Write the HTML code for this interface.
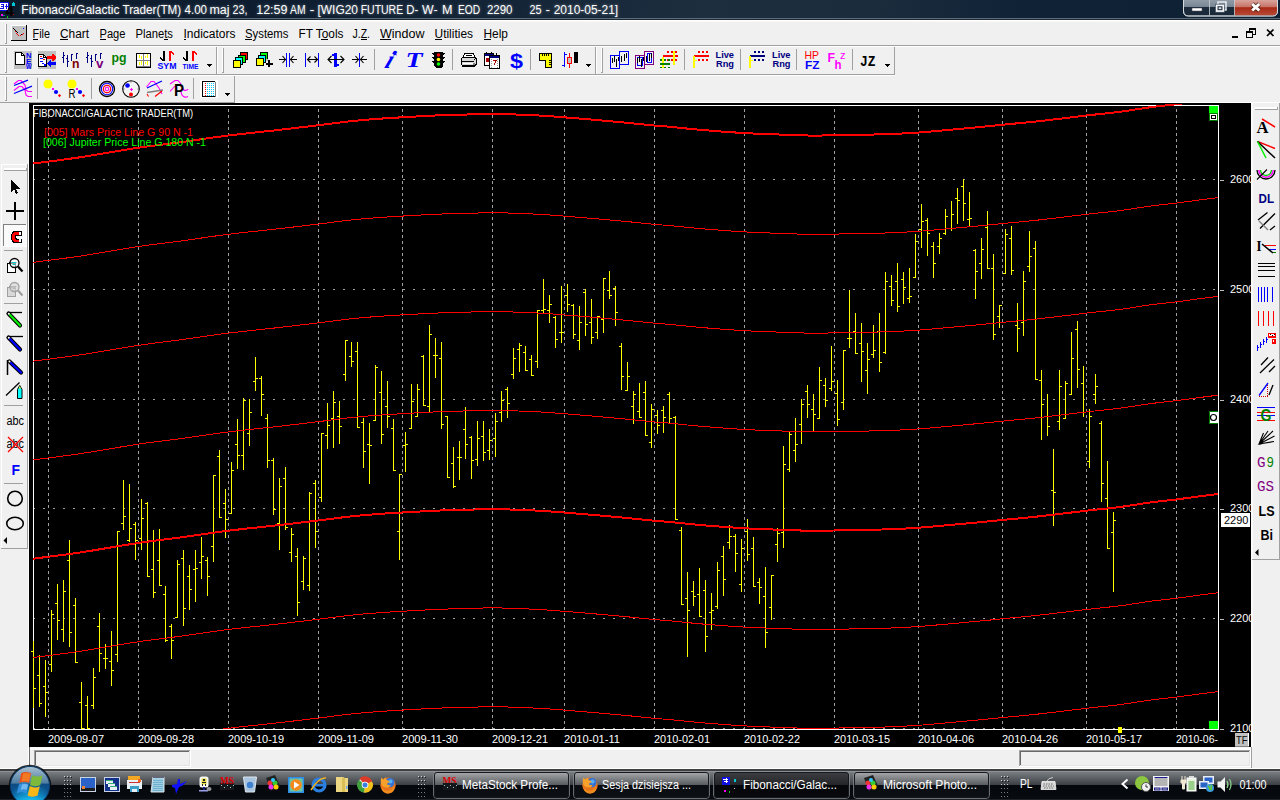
<!DOCTYPE html><html><head><meta charset="utf-8"><title>Fibonacci/Galactic Trader</title><style>
html,body{margin:0;padding:0}
body{width:1280px;height:800px;overflow:hidden;position:relative;background:#f0f0f0;font-family:"Liberation Sans",Arial,sans-serif;font-size:12px;color:#000}
.abs{position:absolute;display:block}
.t{position:absolute;white-space:nowrap;line-height:1}
</style></head><body>
<div class="abs" style="left:0;top:0;width:1280px;height:20px;background:linear-gradient(100deg,#0d1c2d 0%,#0e1e30 22%,#142538 40%,#1d2e3f 55%,#1b2c3d 68%,#102236 80%,#0e2034 100%)"></div>
<div class="abs" style="left:0;top:18px;width:1280px;height:1px;background:#5d6b78"></div>
<div class="abs" style="left:0;top:19px;width:1280px;height:1px;background:#1c2937"></div>
<svg class="abs" style="left:0px;top:0px" width="1280" height="20" viewBox="0 0 1280 20" ><g font-family='"Liberation Sans",Arial,sans-serif'><g font-size="12px" fill="#fff" style="text-shadow:0 0 3px rgba(255,255,255,.5)"><text x="21.3" y="13.5" textLength="98.2" lengthAdjust="spacingAndGlyphs">Fibonacci/Galactic</text><text x="122.5" y="13.5" textLength="58.7" lengthAdjust="spacingAndGlyphs">Trader(TM)</text><text x="184.5" y="13.5" textLength="22.5" lengthAdjust="spacingAndGlyphs">4.00</text><text x="209.5" y="13.5" textLength="20" lengthAdjust="spacingAndGlyphs">maj</text><text x="232.5" y="13.5" textLength="15" lengthAdjust="spacingAndGlyphs">23,</text><text x="256.2" y="13.5" textLength="31.3" lengthAdjust="spacingAndGlyphs">12:59</text><text x="290" y="13.5" textLength="15.5" lengthAdjust="spacingAndGlyphs">AM</text><text x="309.5" y="13.5" textLength="5" lengthAdjust="spacingAndGlyphs">-</text><text x="317.5" y="13.5" textLength="40.5" lengthAdjust="spacingAndGlyphs">[WIG20</text><text x="360.7" y="13.5" textLength="42.5" lengthAdjust="spacingAndGlyphs">FUTURE</text><text x="406.2" y="13.5" textLength="12" lengthAdjust="spacingAndGlyphs">D-</text><text x="422" y="13.5" textLength="15.5" lengthAdjust="spacingAndGlyphs">W-</text><text x="442" y="13.5" textLength="10.5" lengthAdjust="spacingAndGlyphs">M</text><text x="458" y="13.5" textLength="22" lengthAdjust="spacingAndGlyphs">EOD</text><text x="487" y="13.5" textLength="25.5" lengthAdjust="spacingAndGlyphs">2290</text><text x="529.5" y="13.5" textLength="12" lengthAdjust="spacingAndGlyphs">25</text><text x="545.5" y="13.5" textLength="4.5" lengthAdjust="spacingAndGlyphs">-</text><text x="553.7" y="13.5" textLength="64.5" lengthAdjust="spacingAndGlyphs">2010-05-21]</text></g></g><g shape-rendering="crispEdges"><rect x="0" y="2" width="9" height="9" fill="#1010e0" /><rect x="0" y="3" width="8" height="7" fill="#fff" /><rect x="1" y="4" width="3" height="1" fill="#1010e0" /><rect x="3" y="5" width="1" height="1" fill="#1010e0" /><rect x="1" y="6" width="3" height="1" fill="#1010e0" /><rect x="3" y="7" width="1" height="1" fill="#1010e0" /><rect x="0" y="8" width="4" height="1" fill="#1010e0" /><rect x="5" y="6" width="3" height="1" fill="#1010e0" /><rect x="6" y="4" width="1" height="5" fill="#1010e0" /><rect x="12" y="3" width="3" height="3" fill="#00c8d0" /><rect x="13" y="2" width="1" height="1" fill="#00c8d0" /><rect x="1" y="14" width="2" height="2" fill="#f0f" /><rect x="7" y="16" width="1" height="2" fill="#0c0" /><rect x="3" y="15" width="2" height="1" fill="#088" /><rect x="12" y="15" width="1" height="1" fill="#c00" /><rect x="13" y="14" width="1" height="1" fill="#c00" /></g><text x="5.5" y="15.5" font-size="15px" font-weight="bold" fill="#000" font-family='"Liberation Sans",Arial,sans-serif'>4</text><defs><linearGradient id="gb" x1="0" y1="0" x2="0" y2="1"><stop offset="0" stop-color="#939eaa"/><stop offset=".44" stop-color="#7a8794"/><stop offset=".47" stop-color="#1d2c3d"/><stop offset="1" stop-color="#1a2939"/></linearGradient><linearGradient id="gr" x1="0" y1="0" x2="0" y2="1"><stop offset="0" stop-color="#d8a49c"/><stop offset=".42" stop-color="#c8766a"/><stop offset=".5" stop-color="#a92a16"/><stop offset="1" stop-color="#b84a36"/></linearGradient></defs><path d="M1183.5 -1 H1277.5 V11 Q1277.5 16 1272.5 16 H1188.5 Q1183.5 16 1183.5 11 Z" fill="url(#gb)" stroke="#c8ced4" stroke-width="1"/><path d="M1234.5 0 H1277 V11 Q1277 15.5 1272.5 15.5 H1234.5 Z" fill="url(#gr)"/><path d="M1209.5 0V15.5M1234.5 0V15.5" stroke="#c8ced4" stroke-width="1" fill="none" opacity=".8"/><path d="M1183.5 -1 H1277.5 V11 Q1277.5 16 1272.5 16 H1188.5 Q1183.5 16 1183.5 11 Z" fill="none" stroke="#d5dade" stroke-width="1" opacity=".85"/><rect x="1192" y="8" width="10" height="3" fill="#fff" stroke="#445" stroke-width=".5"/><rect x="1218" y="2" width="8" height="8" fill="none" stroke="#e8ecf0" stroke-width="1.500"/><rect x="1215.500" y="4.200" width="9" height="8" fill="#f4f6f8" stroke="#3a4656" stroke-width=".600"/><rect x="1217.500" y="6.200" width="5" height="4" fill="#2c3a4a"/><rect x="1218.700" y="7.300" width="2.600" height="1.800" fill="#dfe4e8"/><path d="M1252.200 4L1259.300 10.500M1259.300 4L1252.200 10.500" stroke="#3a1a16" stroke-width="4.600" stroke-linecap="butt" opacity=".75"/><path d="M1252.200 4L1259.300 10.500M1259.300 4L1252.200 10.500" stroke="#fff" stroke-width="3" stroke-linecap="butt"/></svg>
<svg class="abs" style="left:0px;top:20px" width="1280" height="27" viewBox="0 20 1280 27" ><rect x="0" y="20" width="1280" height="1.5" fill="#fff" /><rect x="0" y="45" width="1280" height="1" fill="#a0a0a0" /><rect x="0" y="46" width="1280" height="1" fill="#fff" /><g shape-rendering="crispEdges"><rect x="5" y="24" width="1" height="19" fill="#fff" /><rect x="6" y="24" width="1" height="19" fill="#a0a0a0" /><rect x="5" y="43" width="2" height="1" fill="#a0a0a0" /><rect x="11" y="25" width="16" height="16" fill="#000" /><rect x="11" y="25" width="15" height="15" fill="#fff" /><rect x="12" y="26" width="14" height="14" fill="#c0c0c0" /><rect x="13" y="28" width="1" height="1" fill="#000" /><rect x="14" y="29" width="1" height="1" fill="#000" /><rect x="15" y="30" width="1" height="1" fill="#000" /><rect x="16" y="31" width="1" height="1" fill="#000" /><rect x="17" y="32" width="1" height="1" fill="#000" /><rect x="21" y="34" width="2" height="1" fill="#000" /><rect x="15" y="31" width="1" height="1" fill="#f00" /><rect x="16" y="33" width="1" height="1" fill="#f00" /><rect x="17" y="34" width="1" height="1" fill="#f00" /><rect x="18" y="35" width="1" height="1" fill="#f00" /><rect x="20" y="35" width="1" height="1" fill="#f00" /><rect x="22" y="34" width="1" height="1" fill="#f00" /><rect x="23" y="33" width="1" height="1" fill="#f00" /><rect x="23" y="28" width="1" height="1" fill="#00f" /><rect x="1232" y="36" width="6" height="2" fill="#000" /><rect x="1249" y="28" width="7" height="2" fill="#000" /><rect x="1249" y="30" width="1" height="2" fill="#000" /><rect x="1255" y="30" width="1" height="4" fill="#000" /><rect x="1253" y="34" width="3" height="1" fill="#000" /><rect x="1246" y="31" width="7" height="2" fill="#000" /><rect x="1246" y="33" width="1" height="4" fill="#000" /><rect x="1252" y="33" width="1" height="4" fill="#000" /><rect x="1246" y="37" width="7" height="1" fill="#000" /></g><path d="M1267 29.5L1273.5 36M1273.5 29.5L1267 36" stroke="#000" stroke-width="1.7" fill="none"/><g font-family='"Liberation Sans",Arial,sans-serif' font-size="12px" fill="#000"><text x="32.5" y="37.5" textLength="17.5" lengthAdjust="spacingAndGlyphs">File</text><text x="60" y="37.5" textLength="29" lengthAdjust="spacingAndGlyphs">Chart</text><text x="99.5" y="37.5" textLength="26" lengthAdjust="spacingAndGlyphs">Page</text><text x="135.5" y="37.5" textLength="37.5" lengthAdjust="spacingAndGlyphs">Planets</text><text x="183.5" y="37.5" textLength="52" lengthAdjust="spacingAndGlyphs">Indicators</text><text x="245" y="37.5" textLength="43.5" lengthAdjust="spacingAndGlyphs">Systems</text><text x="298.5" y="37.5" textLength="45" lengthAdjust="spacingAndGlyphs">FT Tools</text><text x="352.5" y="37.5" textLength="17.5" lengthAdjust="spacingAndGlyphs">J.Z.</text><text x="380" y="37.5" textLength="44.5" lengthAdjust="spacingAndGlyphs">Window</text><text x="434.5" y="37.5" textLength="38.5" lengthAdjust="spacingAndGlyphs">Utilities</text><text x="483.5" y="37.5" textLength="24.5" lengthAdjust="spacingAndGlyphs">Help</text><rect x="32.5" y="39" width="5.5" height="1" fill="#000" shape-rendering="crispEdges"/><rect x="60" y="39" width="7.5" height="1" fill="#000" shape-rendering="crispEdges"/><rect x="99.5" y="39" width="6.5" height="1" fill="#000" shape-rendering="crispEdges"/><rect x="164" y="39" width="4" height="1" fill="#000" shape-rendering="crispEdges"/><rect x="183.5" y="39" width="2.5" height="1" fill="#000" shape-rendering="crispEdges"/><rect x="245" y="39" width="7" height="1" fill="#000" shape-rendering="crispEdges"/><rect x="321" y="39" width="7" height="1" fill="#000" shape-rendering="crispEdges"/><rect x="360.5" y="39" width="6.5" height="1" fill="#000" shape-rendering="crispEdges"/><rect x="380" y="39" width="11" height="1" fill="#000" shape-rendering="crispEdges"/><rect x="434.5" y="39" width="7.5" height="1" fill="#000" shape-rendering="crispEdges"/><rect x="483.5" y="39" width="7.5" height="1" fill="#000" shape-rendering="crispEdges"/></g></svg>
<svg class="abs" style="left:0px;top:47px" width="1280" height="29" viewBox="0 47 1280 29" ><g shape-rendering="crispEdges"><rect x="0" y="74" width="895" height="1" fill="#a0a0a0" /><rect x="0" y="75" width="895" height="1" fill="#fff" /><rect x="5" y="48" width="1" height="24" fill="#fff" /><rect x="6" y="48" width="1" height="24" fill="#a0a0a0" /><rect x="5" y="72" width="2" height="1" fill="#a0a0a0" /><rect x="216" y="47" width="1" height="27" fill="#a0a0a0" /><rect x="217" y="47" width="1" height="27" fill="#fff" /><rect x="222" y="48" width="1" height="24" fill="#fff" /><rect x="223" y="48" width="1" height="24" fill="#a0a0a0" /><rect x="222" y="72" width="2" height="1" fill="#a0a0a0" /><rect x="595" y="47" width="1" height="27" fill="#a0a0a0" /><rect x="596" y="47" width="1" height="27" fill="#fff" /><rect x="601" y="48" width="1" height="24" fill="#fff" /><rect x="602" y="48" width="1" height="24" fill="#a0a0a0" /><rect x="601" y="72" width="2" height="1" fill="#a0a0a0" /><rect x="894" y="47" width="1" height="28" fill="#a0a0a0" /><rect x="374" y="49" width="1" height="21" fill="#a0a0a0" /><rect x="452" y="49" width="1" height="21" fill="#a0a0a0" /><rect x="530" y="49" width="1" height="21" fill="#a0a0a0" /><rect x="684" y="49" width="1" height="21" fill="#a0a0a0" /><rect x="740" y="49" width="1" height="21" fill="#a0a0a0" /><rect x="796" y="49" width="1" height="21" fill="#a0a0a0" /><rect x="852" y="49" width="1" height="21" fill="#a0a0a0" /><rect x="14" y="51" width="18" height="18" fill="#c0c0c0" /><path d="M15.5 52.5h6l2.5 2.5v9.500h-8.500z" fill="#fff" stroke="#000"/><path d="M21.5 52.5v2.500h2.500" fill="none" stroke="#000"/><rect x="38" y="51" width="18" height="18" fill="#c0c0c0" /><path d="M38.500 54.500h5l3 3v8.500h-8z" fill="#fff" stroke="#000"/><path d="M43.500 54.500v3h3" fill="none" stroke="#000"/><rect x="40" y="56" width="2" height="1" fill="#f00" /><rect x="40" y="58" width="3" height="1" fill="#00f" /><rect x="43" y="59" width="2" height="1" fill="#f00" /><rect x="40" y="61" width="3" height="1" fill="#00f" /><rect x="42" y="63" width="2" height="1" fill="#00f" /><rect x="44" y="64" width="2" height="2" fill="#00f" /><path d="M47 56h5v-2h1l3 3v1l-3 3h-1v-2h-5z" fill="#f00"/><path d="M56 62h-5v-2h-1l-3 3v1l3 3h1v-2h5z" fill="#00f"/><rect x="63" y="52" width="1" height="11" fill="#000080" /><rect x="62" y="57" width="1" height="1" fill="#000080" /><rect x="64" y="55" width="1" height="1" fill="#000080" /><rect x="67" y="55" width="1" height="12" fill="#000080" /><rect x="66" y="58" width="1" height="1" fill="#000080" /><rect x="68" y="61" width="1" height="1" fill="#000080" /><rect x="71" y="54" width="1" height="7" fill="#000080" /><rect x="72" y="54" width="1" height="1" fill="#000080" /><rect x="76" y="53" width="1" height="6" fill="#000080" /><rect x="77" y="53" width="1" height="1" fill="#000080" /><rect x="87" y="52" width="1" height="11" fill="#000080" /><rect x="86" y="57" width="1" height="1" fill="#000080" /><rect x="88" y="55" width="1" height="1" fill="#000080" /><rect x="91" y="55" width="1" height="12" fill="#000080" /><rect x="90" y="58" width="1" height="1" fill="#000080" /><rect x="92" y="61" width="1" height="1" fill="#000080" /><rect x="95" y="54" width="1" height="7" fill="#000080" /><rect x="96" y="54" width="1" height="1" fill="#000080" /><rect x="100" y="53" width="1" height="6" fill="#000080" /><rect x="101" y="53" width="1" height="1" fill="#000080" /><rect x="136" y="53" width="15" height="15" fill="#000" /><rect x="137" y="54" width="13" height="12" fill="#fff" /><rect x="137" y="60" width="13" height="1" fill="#808080" /><rect x="143" y="54" width="1" height="12" fill="#808080" /><rect x="137" y="66" width="13" height="1" fill="#808080" /><rect x="139" y="55" width="1" height="3" fill="#ff0" /><rect x="141" y="56" width="1" height="3" fill="#ff0" /><rect x="145" y="56" width="1" height="2" fill="#ff0" /><rect x="147" y="54" width="1" height="4" fill="#ff0" /><rect x="139" y="62" width="1" height="3" fill="#ff0" /><rect x="141" y="61" width="1" height="4" fill="#ff0" /><rect x="145" y="62" width="1" height="2" fill="#ff0" /><rect x="147" y="61" width="1" height="4" fill="#ff0" /><rect x="163" y="51" width="2" height="10" fill="#000" /><path d="M160 57l4 4h-1l-4-3z" fill="#000"/><rect x="169" y="51" width="2" height="10" fill="#f00" /><path d="M171 51l3 3v1l-3-2z" fill="#f00"/><rect x="186" y="51" width="2" height="10" fill="#000" /><path d="M183 57l4 4h-1l-4-3z" fill="#000"/><rect x="192" y="51" width="2" height="10" fill="#f00" /><path d="M194 51l3 3v1l-3-2z" fill="#f00"/><rect x="240" y="52" width="8" height="8" fill="#000" /><rect x="241" y="53" width="6" height="6" fill="#f00" /><rect x="238" y="54.5" width="8" height="8" fill="#000" /><rect x="239" y="55.5" width="6" height="6" fill="#0f0" /><rect x="235" y="57" width="8" height="8" fill="#000" /><rect x="236" y="58" width="6" height="6" fill="#0ff" /><rect x="233" y="60" width="8" height="8" fill="#000" /><rect x="234" y="61" width="6" height="6" fill="#ff0" /><rect x="260" y="52" width="8" height="8" fill="#000" /><rect x="261" y="53" width="6" height="6" fill="#0f0" /><rect x="258" y="55" width="8" height="8" fill="#000" /><rect x="259" y="56" width="6" height="6" fill="#0ff" /><rect x="256" y="58" width="8" height="8" fill="#000" /><rect x="257" y="59" width="6" height="6" fill="#ff0" /><rect x="268" y="60" width="2" height="7" fill="#000" /><rect x="265.5" y="62.5" width="7" height="2" fill="#000" /><rect x="266" y="59" width="2" height="2" fill="#c0c0c0" /><rect x="286" y="53" width="1" height="14" fill="#00f" /><rect x="289" y="53" width="1" height="14" fill="#00f" /><rect x="279" y="59" width="7" height="1" fill="#000" /><rect x="290" y="59" width="7" height="1" fill="#000" /><rect x="305" y="53" width="1" height="14" fill="#00f" /><rect x="318" y="53" width="1" height="14" fill="#00f" /><rect x="307" y="59" width="11" height="1" fill="#000" /><rect x="334" y="53" width="3" height="14" fill="#00f" /><rect x="332" y="54" width="2" height="2" fill="#00f" /><rect x="337" y="64" width="2" height="2" fill="#00f" /><rect x="328" y="59" width="16" height="1" fill="#000" /><rect x="359" y="53" width="1" height="14" fill="#00f" /><rect x="352" y="59" width="7" height="1" fill="#000" /><rect x="360" y="59" width="7" height="1" fill="#000" /></g><g fill="none" stroke="#000" stroke-width="1.1"><path d="M282.500 56l3 3.500l-3 3.500M293.500 56l-3 3.500l3 3.500"/><path d="M310.500 56.500l-3 3l3 3M314.500 56.500l3 3l-3 3"/><path d="M331.500 56l-3.500 3.500l3.500 3.500M340.500 56l3.500 3.500l-3.500 3.500"/><path d="M355.500 56l3 3.500l-3 3.500M363.500 56l-3 3.500l3 3.500"/></g><g font-family='"Liberation Sans",Arial,sans-serif'><g font-weight="bold" fill="#00f" font-size="7.500px"><text x="26" y="57.5" textLength="5.5" lengthAdjust="spacingAndGlyphs">N</text><text x="26" y="63.5" textLength="5.5" lengthAdjust="spacingAndGlyphs">E</text><text x="26" y="69" textLength="5.5" lengthAdjust="spacingAndGlyphs">W</text></g><text x="72" y="68" font-size="13.5px" fill="#800000" font-weight="bold" textLength="7.5" lengthAdjust="spacingAndGlyphs">n</text><text x="96" y="68" font-size="13.5px" fill="#800080" font-weight="bold" textLength="7.5" lengthAdjust="spacingAndGlyphs">v</text><text x="111.5" y="62" font-size="13px" fill="#008000" font-weight="bold" textLength="15" lengthAdjust="spacingAndGlyphs">pg</text><text x="157.5" y="69" font-size="9px" fill="#00f" font-weight="bold" textLength="19" lengthAdjust="spacingAndGlyphs">SYM</text><text x="182.5" y="69" font-size="7.5px" fill="#00f" font-weight="bold" textLength="16" lengthAdjust="spacingAndGlyphs">TIME</text><text x="510" y="67.5" font-size="20px" fill="#00f" font-weight="bold" textLength="13" lengthAdjust="spacingAndGlyphs">$</text><text x="715.5" y="58" font-size="8.5px" fill="#000080" font-weight="bold" textLength="18.5" lengthAdjust="spacingAndGlyphs">Live</text><text x="716" y="66.5" font-size="8.5px" fill="#000080" font-weight="bold" textLength="18" lengthAdjust="spacingAndGlyphs">Rng</text><text x="772" y="58" font-size="8.5px" fill="#000080" font-weight="bold" textLength="18.5" lengthAdjust="spacingAndGlyphs">Live</text><text x="772.5" y="66.5" font-size="8.5px" fill="#000080" font-weight="bold" textLength="18" lengthAdjust="spacingAndGlyphs">Rng</text><text x="804.5" y="58.5" font-size="10.5px" fill="#f00" textLength="14.5" lengthAdjust="spacingAndGlyphs">HP</text><text x="805" y="69" font-size="11.5px" fill="#00f" font-weight="bold" textLength="14.5" lengthAdjust="spacingAndGlyphs">FZ</text><text x="827.5" y="62" font-size="13.5px" fill="#f0f" font-weight="bold" textLength="7.5" lengthAdjust="spacingAndGlyphs">F</text><text x="834.5" y="69" font-size="13.5px" fill="#f0f" font-weight="bold" textLength="7" lengthAdjust="spacingAndGlyphs">h</text><text x="840" y="58.5" font-size="10.5px" fill="#f0f" textLength="5.5" lengthAdjust="spacingAndGlyphs">z</text></g><text x="860" y="65.500" font-family='"Liberation Mono",monospace' font-weight="bold" font-size="14.500px" textLength="15.5" lengthAdjust="spacingAndGlyphs">JZ</text><path d="M394.500 50.500l.9 1.900 2.100-.2-1.500 1.500 1 1.900-2-.9-1.500 1.500.2-2.100-1.900-.9 2.100-.4z" fill="#00f"/><text transform="translate(383.500,68) skewX(-22)" font-family='"Liberation Serif",serif' font-weight="bold" font-style="italic" font-size="25px" fill="#00f">i</text><text x="405.500" y="67" font-family='"Liberation Serif",serif' font-weight="bold" font-style="italic" font-size="20px" fill="#00f" textLength="17" lengthAdjust="spacingAndGlyphs">T</text><g shape-rendering="crispEdges"><path d="M434 52h9v1h2l-2 3v1h2l-2 3v1h2l-2 3v2l-2 2h-5l-2-2v-2l-2-3h2v-1l-2-3h2v-1l-2-3h2z" fill="#000"/></g><circle cx="438.500" cy="55" r="1.800" fill="#f00"/><circle cx="438.500" cy="59.500" r="1.800" fill="#ff0"/><circle cx="438.500" cy="64" r="1.800" fill="#0f0"/><g shape-rendering="crispEdges"><path d="M464.500 53.500h9l1.500 4h-12z" fill="#fff" stroke="#000"/><rect x="466" y="55" width="6" height="1" fill="#000" /><path d="M461.500 58.500l1.500-1.500h11l2 1.500v6l-2 2h-11l-1.500-2z" fill="#d8d8d8" stroke="#000"/><rect x="462" y="61" width="12" height="1" fill="#000" /><rect x="463" y="63" width="10" height="1" fill="#fff" /><rect x="462" y="65" width="12" height="1" fill="#000" /><rect x="474" y="59" width="1" height="1" fill="#000" /><rect x="473" y="63" width="2" height="2" fill="#808080" /><rect x="484" y="53" width="10" height="13" fill="#000" /><rect x="485" y="56" width="8" height="9" fill="#fff" /><rect x="485" y="54" width="8" height="2" fill="#000080" /><rect x="486" y="58" width="3" height="4" fill="#a00" /><rect x="489" y="55" width="11" height="14" fill="#000" /><rect x="490" y="58" width="9" height="10" fill="#fff" /><rect x="490" y="56" width="9" height="2" fill="#000080" /><rect x="493" y="60" width="4" height="1" fill="#a00" /><rect x="495" y="61" width="1" height="2" fill="#a00" /><rect x="494" y="63" width="1" height="2" fill="#a00" /><rect x="486" y="52" width="1" height="2" fill="#000" /><rect x="491" y="52" width="1" height="2" fill="#000" /><rect x="496" y="53" width="1" height="2" fill="#000" /><rect x="491" y="59" width="1" height="1" fill="#999" /><rect x="497" y="59" width="1" height="1" fill="#999" /><rect x="491" y="61" width="1" height="1" fill="#999" /><rect x="497" y="61" width="1" height="1" fill="#999" /><rect x="491" y="63" width="1" height="1" fill="#999" /><rect x="497" y="63" width="1" height="1" fill="#999" /><rect x="491" y="65" width="1" height="1" fill="#999" /><rect x="497" y="65" width="1" height="1" fill="#999" /><rect x="491" y="67" width="1" height="1" fill="#999" /><rect x="497" y="67" width="1" height="1" fill="#999" /><path d="M539.500 53.500h12v14h-6v-7h-6z" fill="#ff0" stroke="#000"/><rect x="542" y="54" width="1" height="2" fill="#000" /><rect x="544" y="54" width="1" height="2" fill="#000" /><rect x="546" y="54" width="1" height="2" fill="#000" /><rect x="548" y="54" width="1" height="2" fill="#000" /><rect x="549" y="60" width="2" height="1" fill="#000" /><rect x="549" y="62" width="2" height="1" fill="#000" /><rect x="549" y="64" width="2" height="1" fill="#000" /><rect x="564" y="52" width="1" height="15" fill="#00f" /><rect x="565" y="54" width="2" height="1" fill="#00f" /><rect x="562" y="65" width="2" height="1" fill="#00f" /><rect x="569" y="53" width="1" height="15" fill="#f00" /><rect x="567" y="57" width="5" height="7" fill="#f00" /><rect x="568" y="58" width="3" height="5" fill="#c0c0c0" /><rect x="574" y="52" width="4" height="11" fill="#000" /><rect x="586" y="64" width="5" height="1" fill="#000" /><rect x="587" y="65" width="3" height="1" fill="#000" /><rect x="588" y="66" width="1" height="1" fill="#000" /><rect x="207" y="64" width="5" height="1" fill="#000" /><rect x="208" y="65" width="3" height="1" fill="#000" /><rect x="209" y="66" width="1" height="1" fill="#000" /><rect x="885" y="64" width="5" height="1" fill="#000" /><rect x="886" y="65" width="3" height="1" fill="#000" /><rect x="887" y="66" width="1" height="1" fill="#000" /><rect x="610.5" y="55.5" width="9" height="13" fill="#f0f0f0" stroke="#00f"/><rect x="619.5" y="51.5" width="9" height="13" fill="#f0f0f0" stroke="#00f"/><rect x="612" y="58" width="1" height="5" fill="#000" /><rect x="614" y="56" width="1" height="6" fill="#000" /><rect x="616" y="59" width="1" height="8" fill="#000" /><rect x="618" y="57" width="1" height="4" fill="#000" /><rect x="621" y="56" width="1" height="6" fill="#000" /><rect x="624" y="54" width="1" height="7" fill="#000" /><rect x="626" y="53" width="1" height="5" fill="#000" /><rect x="635.5" y="55.5" width="9" height="13" fill="#f0f0f0" stroke="#800080"/><rect x="644.5" y="51.5" width="9" height="13" fill="#f0f0f0" stroke="#800080"/><rect x="637.500" y="57.500" width="5" height="8" fill="none" stroke="#00f"/><rect x="647.500" y="53.500" width="4" height="9" fill="none" stroke="#00f"/><rect x="637" y="58" width="1" height="5" fill="#000" /><rect x="639" y="56" width="1" height="6" fill="#000" /><rect x="641" y="59" width="1" height="8" fill="#000" /><rect x="643" y="57" width="1" height="4" fill="#000" /><rect x="646" y="56" width="1" height="6" fill="#000" /><rect x="649" y="54" width="1" height="7" fill="#000" /><rect x="651" y="53" width="1" height="5" fill="#000" /><rect x="667" y="51" width="2" height="2" fill="#f00" /><rect x="671" y="51" width="2" height="2" fill="#f00" /><rect x="675" y="51" width="2" height="2" fill="#f00" /><rect x="663" y="55" width="15" height="2" fill="#f00" /><rect x="667" y="59" width="2" height="2" fill="#f00" /><rect x="671" y="59" width="2" height="2" fill="#f00" /><rect x="675" y="59" width="2" height="2" fill="#f00" /><rect x="673" y="51" width="2" height="14" fill="#ff0" /><rect x="662" y="57" width="2" height="11" fill="#ff0" /><rect x="660" y="59" width="2" height="2" fill="#008000" /><rect x="664" y="59" width="2" height="2" fill="#008000" /><rect x="668" y="59" width="2" height="2" fill="#008000" /><rect x="660" y="63" width="10" height="2" fill="#008000" /><rect x="660" y="67" width="2" height="1" fill="#008000" /><rect x="664" y="67" width="2" height="1" fill="#008000" /><rect x="668" y="67" width="2" height="1" fill="#008000" /><rect x="698" y="51" width="2" height="2" fill="#f00" /><rect x="702" y="51" width="2" height="2" fill="#f00" /><rect x="706" y="51" width="2" height="2" fill="#f00" /><rect x="694" y="55" width="15" height="2" fill="#f00" /><rect x="698" y="59" width="2" height="2" fill="#f00" /><rect x="702" y="59" width="2" height="2" fill="#f00" /><rect x="706" y="59" width="2" height="2" fill="#f00" /><rect x="693" y="56" width="2" height="12" fill="#ff0" /><rect x="695" y="60" width="2" height="1" fill="#ff0" /><rect x="754" y="51" width="2" height="2" fill="#000080" /><rect x="758" y="51" width="2" height="2" fill="#000080" /><rect x="762" y="51" width="2" height="2" fill="#000080" /><rect x="750" y="55" width="15" height="2" fill="#000080" /><rect x="754" y="59" width="2" height="2" fill="#000080" /><rect x="758" y="59" width="2" height="2" fill="#000080" /><rect x="762" y="59" width="2" height="2" fill="#000080" /><rect x="749" y="56" width="2" height="12" fill="#ff0" /><rect x="751" y="60" width="2" height="1" fill="#ff0" /></g></svg>
<svg class="abs" style="left:0px;top:76px" width="1280" height="27" viewBox="0 76 1280 27" ><g shape-rendering="crispEdges"><rect x="0" y="102" width="235" height="1" fill="#a0a0a0" /><rect x="234" y="76" width="1" height="27" fill="#a0a0a0" /><rect x="235" y="102" width="1045" height="1" fill="#fff" /><rect x="5" y="77" width="1" height="23" fill="#fff" /><rect x="6" y="77" width="1" height="23" fill="#a0a0a0" /><rect x="5" y="100" width="2" height="1" fill="#a0a0a0" /><rect x="37" y="78" width="1" height="21" fill="#a0a0a0" /><rect x="91" y="78" width="1" height="21" fill="#a0a0a0" /><rect x="193" y="78" width="1" height="21" fill="#a0a0a0" /><rect x="200" y="80" width="18" height="18" fill="#fff" /><rect x="202" y="81" width="13" height="1" fill="#000" /><rect x="202" y="81" width="1" height="16" fill="#000" /><rect x="202" y="96" width="14" height="1" fill="#000" /><rect x="215" y="82" width="1" height="15" fill="#808080" /><rect x="205" y="83" width="1" height="1" fill="#f00" /><rect x="207" y="83" width="1" height="1" fill="#0cf" /><rect x="209" y="83" width="1" height="1" fill="#0cf" /><rect x="211" y="83" width="1" height="1" fill="#0cf" /><rect x="213" y="83" width="1" height="1" fill="#0cf" /><rect x="205" y="85" width="1" height="1" fill="#f00" /><rect x="207" y="85" width="1" height="1" fill="#0cf" /><rect x="209" y="85" width="1" height="1" fill="#0cf" /><rect x="211" y="85" width="1" height="1" fill="#0cf" /><rect x="213" y="85" width="1" height="1" fill="#0cf" /><rect x="205" y="87" width="1" height="1" fill="#f00" /><rect x="207" y="87" width="1" height="1" fill="#0cf" /><rect x="209" y="87" width="1" height="1" fill="#0cf" /><rect x="211" y="87" width="1" height="1" fill="#0cf" /><rect x="213" y="87" width="1" height="1" fill="#0cf" /><rect x="205" y="89" width="1" height="1" fill="#f00" /><rect x="207" y="89" width="1" height="1" fill="#0cf" /><rect x="209" y="89" width="1" height="1" fill="#0cf" /><rect x="211" y="89" width="1" height="1" fill="#0cf" /><rect x="213" y="89" width="1" height="1" fill="#0cf" /><rect x="205" y="91" width="1" height="1" fill="#f00" /><rect x="207" y="91" width="1" height="1" fill="#0cf" /><rect x="209" y="91" width="1" height="1" fill="#0cf" /><rect x="211" y="91" width="1" height="1" fill="#0cf" /><rect x="213" y="91" width="1" height="1" fill="#0cf" /><rect x="205" y="93" width="1" height="1" fill="#f00" /><rect x="207" y="93" width="1" height="1" fill="#0cf" /><rect x="209" y="93" width="1" height="1" fill="#0cf" /><rect x="211" y="93" width="1" height="1" fill="#0cf" /><rect x="213" y="93" width="1" height="1" fill="#0cf" /><rect x="205" y="95" width="1" height="1" fill="#f00" /><rect x="207" y="95" width="1" height="1" fill="#0cf" /><rect x="209" y="95" width="1" height="1" fill="#0cf" /><rect x="211" y="95" width="1" height="1" fill="#0cf" /><rect x="213" y="95" width="1" height="1" fill="#0cf" /><rect x="225" y="93" width="5" height="1" fill="#000" /><rect x="226" y="94" width="3" height="1" fill="#000" /><rect x="227" y="95" width="1" height="1" fill="#000" /><rect x="52" y="88" width="2" height="2" fill="#f0f" /><rect x="76" y="88" width="2" height="2" fill="#f0f" /></g><g fill="none" stroke-width="1.200"><path d="M14 84L18.500 80.500H21L25 85L26 90L28 91.500H32M14 90.500L19 86.500H22L25 90L26 95L28 96.500H32" stroke="#f0f"/><path d="M14 85.500L28 80.200M14 93.500L32 86.200" stroke="#00f" stroke-width="1.300"/></g><circle cx="48" cy="84" r="4.500" fill="#ff0"/><circle cx="56" cy="92" r="2.100" fill="#00f"/><path d="M59.5 94l1.600 1.600-1.600 1.600-1.600-1.600z" fill="#f00"/><circle cx="72" cy="84" r="4.500" fill="#ff0"/><circle cx="80" cy="92" r="2.100" fill="#00f"/><path d="M83.5 94l1.600 1.600-1.600 1.600-1.600-1.600z" fill="#f00"/><text x="68.500" y="98" font-family='"Liberation Sans",Arial,sans-serif' font-size="12px" textLength="7" lengthAdjust="spacingAndGlyphs">R</text><g fill="none"><circle cx="107" cy="89" r="7.500" stroke="#000" stroke-width="1.300"/><circle cx="107" cy="89" r="5.700" stroke="#00f" stroke-width="1.100"/><circle cx="107" cy="89" r="3.700" stroke="#f00" stroke-width="1.200"/><circle cx="107" cy="89" r="1.700" stroke="#f0f" stroke-width="1.100"/></g><circle cx="131" cy="89" r="8.300" fill="#f4f4f4" stroke="#000" stroke-width="1.100"/><circle cx="127.500" cy="85.500" r="2.300" fill="#00f"/><circle cx="131" cy="94.500" r="2" fill="#f00"/><path d="M130 89.500h3M131.500 88v3" stroke="#f0f" stroke-width="1"/><path d="M131 81v1.500M131 96.500v1M123 89h1.500M137.500 89h1.500" stroke="#666" stroke-width="1"/><g fill="none" stroke-width="1.100"><path d="M146.500 87L151 81.500H154L159 88L162 94" stroke="#f0f"/><path d="M147 88L162 81" stroke="#00f" stroke-width="1.300"/><path d="M147 92.500L163 90" stroke="#808080" stroke-width="1.300"/><path d="M155 96.500L162 91" stroke="#f00" stroke-width="1.300"/><path d="M147 94L148.500 96.500" stroke="#f00"/></g><g fill="none" stroke-width="1.100" stroke="#f0f"><path d="M170 84L175 80.500H178L181 84M170 91.500L175 86"/><path d="M183 88C183 92 188 90 188 89M181 92C182 98 186 97.500 188 96.500"/></g><text x="174" y="95.500" font-family='"Liberation Sans",Arial,sans-serif' font-size="17px" font-weight="bold" textLength="10" lengthAdjust="spacingAndGlyphs">P</text></svg>
<svg class="abs" style="left:29px;top:103px" width="1222" height="644" viewBox="29 103 1222 644">
<rect x="29" y="103" width="1222" height="644" fill="#000"/>
<g shape-rendering="crispEdges" stroke="#a0a0a0" stroke-width="1" fill="none">
<line x1="48.5" y1="109" x2="48.5" y2="733" stroke-dasharray="3 3"/>
<line x1="138.5" y1="109" x2="138.5" y2="733" stroke-dasharray="3 3"/>
<line x1="228.5" y1="109" x2="228.5" y2="733" stroke-dasharray="3 3"/>
<line x1="318.5" y1="109" x2="318.5" y2="733" stroke-dasharray="3 3"/>
<line x1="402.5" y1="109" x2="402.5" y2="733" stroke-dasharray="3 3"/>
<line x1="492.5" y1="109" x2="492.5" y2="733" stroke-dasharray="3 3"/>
<line x1="564.5" y1="109" x2="564.5" y2="733" stroke-dasharray="3 3"/>
<line x1="654.5" y1="109" x2="654.5" y2="733" stroke-dasharray="3 3"/>
<line x1="744.5" y1="109" x2="744.5" y2="733" stroke-dasharray="3 3"/>
<line x1="834.5" y1="109" x2="834.5" y2="733" stroke-dasharray="3 3"/>
<line x1="918.5" y1="109" x2="918.5" y2="733" stroke-dasharray="3 3"/>
<line x1="1002.5" y1="109" x2="1002.5" y2="733" stroke-dasharray="3 3"/>
<line x1="1086.5" y1="109" x2="1086.5" y2="733" stroke-dasharray="3 3"/>
<line x1="1176.5" y1="109" x2="1176.5" y2="733" stroke-dasharray="3 3"/>
<line x1="33" y1="179.5" x2="1218" y2="179.5" stroke-dasharray="2 8"/>
<line x1="33" y1="289.5" x2="1218" y2="289.5" stroke-dasharray="2 8"/>
<line x1="33" y1="399.5" x2="1218" y2="399.5" stroke-dasharray="2 8"/>
<line x1="33" y1="508.5" x2="1218" y2="508.5" stroke-dasharray="2 8"/>
<line x1="33" y1="618.5" x2="1218" y2="618.5" stroke-dasharray="2 8"/>
<line x1="33" y1="728.5" x2="1218" y2="728.5" stroke-dasharray="2 8"/>
</g>
<g shape-rendering="crispEdges" fill="#fff">
<rect x="33" y="105" width="1186" height="1"/>
<rect x="33" y="729" width="1186" height="1"/>
<rect x="33" y="105" width="1" height="625"/>
<rect x="1218" y="105" width="1" height="625"/>
</g>
<path shape-rendering="crispEdges" fill="#ff0" d="M33 641h1v67h-1zM31 651h2v1h-2zM34 688h2v1h-2zM39 655h1v52h-1zM37 675h2v1h-2zM40 703h2v1h-2zM45 660h1v57h-1zM43 686h2v1h-2zM46 692h2v1h-2zM51 610h1v62h-1zM49 664h2v1h-2zM52 614h2v1h-2zM57 584h1v56h-1zM55 603h2v1h-2zM58 620h2v1h-2zM63 580h1v62h-1zM61 629h2v1h-2zM64 591h2v1h-2zM69 540h1v107h-1zM67 560h2v1h-2zM70 632h2v1h-2zM75 598h1v65h-1zM73 605h2v1h-2zM76 662h2v1h-2zM81 682h1v47h-1zM79 702h2v1h-2zM82 728h2v1h-2zM87 696h1v33h-1zM85 705h2v1h-2zM88 728h2v1h-2zM93 668h1v41h-1zM91 705h2v1h-2zM94 677h2v1h-2zM99 613h1v59h-1zM97 626h2v1h-2zM100 653h2v1h-2zM105 644h1v25h-1zM103 658h2v1h-2zM106 658h2v1h-2zM111 631h1v55h-1zM109 661h2v1h-2zM112 670h2v1h-2zM117 531h1v131h-1zM115 654h2v1h-2zM118 531h2v1h-2zM123 480h1v50h-1zM121 523h2v1h-2zM124 516h2v1h-2zM129 484h1v58h-1zM127 540h2v1h-2zM130 528h2v1h-2zM135 522h1v38h-1zM133 524h2v1h-2zM136 540h2v1h-2zM141 499h1v51h-1zM139 538h2v1h-2zM142 518h2v1h-2zM147 502h1v75h-1zM145 503h2v1h-2zM148 576h2v1h-2zM153 530h1v68h-1zM151 569h2v1h-2zM154 592h2v1h-2zM159 529h1v57h-1zM157 560h2v1h-2zM160 585h2v1h-2zM165 586h1v56h-1zM163 594h2v1h-2zM166 640h2v1h-2zM171 624h1v35h-1zM169 626h2v1h-2zM172 640h2v1h-2zM177 560h1v58h-1zM175 617h2v1h-2zM178 564h2v1h-2zM183 550h1v76h-1zM181 558h2v1h-2zM184 608h2v1h-2zM189 565h1v45h-1zM187 576h2v1h-2zM190 589h2v1h-2zM195 550h1v52h-1zM193 569h2v1h-2zM196 568h2v1h-2zM201 537h1v42h-1zM199 562h2v1h-2zM202 556h2v1h-2zM207 557h1v39h-1zM205 560h2v1h-2zM208 576h2v1h-2zM213 475h1v87h-1zM211 546h2v1h-2zM214 475h2v1h-2zM219 450h1v68h-1zM217 456h2v1h-2zM220 517h2v1h-2zM225 489h1v49h-1zM223 503h2v1h-2zM226 519h2v1h-2zM231 462h1v52h-1zM229 513h2v1h-2zM232 470h2v1h-2zM237 419h1v50h-1zM235 444h2v1h-2zM238 455h2v1h-2zM243 398h1v72h-1zM241 455h2v1h-2zM244 400h2v1h-2zM249 399h1v47h-1zM247 433h2v1h-2zM250 412h2v1h-2zM255 357h1v34h-1zM253 381h2v1h-2zM256 378h2v1h-2zM261 376h1v40h-1zM259 378h2v1h-2zM262 394h2v1h-2zM267 414h1v54h-1zM265 418h2v1h-2zM268 460h2v1h-2zM273 458h1v57h-1zM271 460h2v1h-2zM274 509h2v1h-2zM279 478h1v72h-1zM277 523h2v1h-2zM280 486h2v1h-2zM285 467h1v63h-1zM283 478h2v1h-2zM286 527h2v1h-2zM291 528h1v34h-1zM289 552h2v1h-2zM292 534h2v1h-2zM297 548h1v68h-1zM295 556h2v1h-2zM298 602h2v1h-2zM303 556h1v34h-1zM301 581h2v1h-2zM304 558h2v1h-2zM309 492h1v99h-1zM307 585h2v1h-2zM310 493h2v1h-2zM315 480h1v68h-1zM313 483h2v1h-2zM316 531h2v1h-2zM321 433h1v69h-1zM319 497h2v1h-2zM322 433h2v1h-2zM327 403h1v46h-1zM325 435h2v1h-2zM328 425h2v1h-2zM333 391h1v57h-1zM331 418h2v1h-2zM334 402h2v1h-2zM339 401h1v43h-1zM337 416h2v1h-2zM340 426h2v1h-2zM345 340h1v41h-1zM343 374h2v1h-2zM346 340h2v1h-2zM351 342h1v25h-1zM349 356h2v1h-2zM352 361h2v1h-2zM357 342h1v86h-1zM355 351h2v1h-2zM358 427h2v1h-2zM363 418h1v50h-1zM361 422h2v1h-2zM364 451h2v1h-2zM369 423h1v61h-1zM367 444h2v1h-2zM370 445h2v1h-2zM375 365h1v56h-1zM373 420h2v1h-2zM376 367h2v1h-2zM381 371h1v73h-1zM379 392h2v1h-2zM382 434h2v1h-2zM387 381h1v47h-1zM385 406h2v1h-2zM388 416h2v1h-2zM393 419h1v52h-1zM391 428h2v1h-2zM394 470h2v1h-2zM399 474h1v86h-1zM397 531h2v1h-2zM400 474h2v1h-2zM405 432h1v40h-1zM403 445h2v1h-2zM406 444h2v1h-2zM411 384h1v45h-1zM409 428h2v1h-2zM412 401h2v1h-2zM417 384h1v33h-1zM415 416h2v1h-2zM418 389h2v1h-2zM423 355h1v51h-1zM421 356h2v1h-2zM424 405h2v1h-2zM429 325h1v88h-1zM427 406h2v1h-2zM430 334h2v1h-2zM435 338h1v40h-1zM433 355h2v1h-2zM436 355h2v1h-2zM441 342h1v87h-1zM439 358h2v1h-2zM442 424h2v1h-2zM447 416h1v62h-1zM445 416h2v1h-2zM448 477h2v1h-2zM453 447h1v41h-1zM451 463h2v1h-2zM454 486h2v1h-2zM459 441h1v39h-1zM457 457h2v1h-2zM460 457h2v1h-2zM465 407h1v52h-1zM463 429h2v1h-2zM466 444h2v1h-2zM471 436h1v43h-1zM469 437h2v1h-2zM472 460h2v1h-2zM477 421h1v45h-1zM475 459h2v1h-2zM478 438h2v1h-2zM483 421h1v40h-1zM481 436h2v1h-2zM484 452h2v1h-2zM489 429h1v31h-1zM487 450h2v1h-2zM490 440h2v1h-2zM495 413h1v44h-1zM493 438h2v1h-2zM496 421h2v1h-2zM501 391h1v31h-1zM499 412h2v1h-2zM502 400h2v1h-2zM507 387h1v31h-1zM505 389h2v1h-2zM508 403h2v1h-2zM513 348h1v31h-1zM511 374h2v1h-2zM514 358h2v1h-2zM519 343h1v29h-1zM517 349h2v1h-2zM520 345h2v1h-2zM525 346h1v25h-1zM523 352h2v1h-2zM526 370h2v1h-2zM531 355h1v21h-1zM529 359h2v1h-2zM532 375h2v1h-2zM537 310h1v58h-1zM535 361h2v1h-2zM538 310h2v1h-2zM543 279h1v34h-1zM541 310h2v1h-2zM544 309h2v1h-2zM549 295h1v28h-1zM547 310h2v1h-2zM550 304h2v1h-2zM555 316h1v32h-1zM553 317h2v1h-2zM556 339h2v1h-2zM561 286h1v57h-1zM559 332h2v1h-2zM562 332h2v1h-2zM567 284h1v28h-1zM565 295h2v1h-2zM568 304h2v1h-2zM573 304h1v35h-1zM571 305h2v1h-2zM574 334h2v1h-2zM579 306h1v44h-1zM577 340h2v1h-2zM580 322h2v1h-2zM585 289h1v47h-1zM583 292h2v1h-2zM586 324h2v1h-2zM591 299h1v45h-1zM589 322h2v1h-2zM592 337h2v1h-2zM597 316h1v23h-1zM595 332h2v1h-2zM598 316h2v1h-2zM603 278h1v55h-1zM601 319h2v1h-2zM604 278h2v1h-2zM609 271h1v28h-1zM607 290h2v1h-2zM610 295h2v1h-2zM615 286h1v40h-1zM613 288h2v1h-2zM616 312h2v1h-2zM621 343h1v47h-1zM619 346h2v1h-2zM622 376h2v1h-2zM627 362h1v29h-1zM625 390h2v1h-2zM628 376h2v1h-2zM633 391h1v33h-1zM631 406h2v1h-2zM634 394h2v1h-2zM639 383h1v35h-1zM637 411h2v1h-2zM640 417h2v1h-2zM645 381h1v55h-1zM643 392h2v1h-2zM646 435h2v1h-2zM651 404h1v44h-1zM649 442h2v1h-2zM652 409h2v1h-2zM657 410h1v24h-1zM655 415h2v1h-2zM658 425h2v1h-2zM663 406h1v27h-1zM661 410h2v1h-2zM664 417h2v1h-2zM669 392h1v31h-1zM667 394h2v1h-2zM670 418h2v1h-2zM675 416h1v104h-1zM673 417h2v1h-2zM676 519h2v1h-2zM681 527h1v78h-1zM679 530h2v1h-2zM682 604h2v1h-2zM687 572h1v85h-1zM685 598h2v1h-2zM688 610h2v1h-2zM693 581h1v25h-1zM691 591h2v1h-2zM694 596h2v1h-2zM699 568h1v49h-1zM697 594h2v1h-2zM700 616h2v1h-2zM705 580h1v72h-1zM703 590h2v1h-2zM706 636h2v1h-2zM711 593h1v37h-1zM709 612h2v1h-2zM712 610h2v1h-2zM717 562h1v47h-1zM715 606h2v1h-2zM718 570h2v1h-2zM723 546h1v50h-1zM721 556h2v1h-2zM724 579h2v1h-2zM729 525h1v24h-1zM727 542h2v1h-2zM730 536h2v1h-2zM735 534h1v38h-1zM733 536h2v1h-2zM736 553h2v1h-2zM741 539h1v53h-1zM739 584h2v1h-2zM742 548h2v1h-2zM747 519h1v42h-1zM745 531h2v1h-2zM748 554h2v1h-2zM753 537h1v50h-1zM751 548h2v1h-2zM754 586h2v1h-2zM759 578h1v26h-1zM757 582h2v1h-2zM760 587h2v1h-2zM765 567h1v81h-1zM763 596h2v1h-2zM766 632h2v1h-2zM771 575h1v45h-1zM769 607h2v1h-2zM772 575h2v1h-2zM777 528h1v34h-1zM775 544h2v1h-2zM778 533h2v1h-2zM783 446h1v102h-1zM781 532h2v1h-2zM784 464h2v1h-2zM789 432h1v40h-1zM787 469h2v1h-2zM790 434h2v1h-2zM795 418h1v44h-1zM793 450h2v1h-2zM796 444h2v1h-2zM801 399h1v45h-1zM799 424h2v1h-2zM802 404h2v1h-2zM807 385h1v33h-1zM805 391h2v1h-2zM808 404h2v1h-2zM813 394h1v38h-1zM811 409h2v1h-2zM814 414h2v1h-2zM819 367h1v52h-1zM817 418h2v1h-2zM820 380h2v1h-2zM825 378h1v29h-1zM823 385h2v1h-2zM826 400h2v1h-2zM831 346h1v45h-1zM829 388h2v1h-2zM832 381h2v1h-2zM837 380h1v46h-1zM835 393h2v1h-2zM838 419h2v1h-2zM843 350h1v60h-1zM841 402h2v1h-2zM844 350h2v1h-2zM849 290h1v58h-1zM847 338h2v1h-2zM850 338h2v1h-2zM855 313h1v41h-1zM853 331h2v1h-2zM856 353h2v1h-2zM861 323h1v59h-1zM859 343h2v1h-2zM862 351h2v1h-2zM867 343h1v51h-1zM865 370h2v1h-2zM868 359h2v1h-2zM873 325h1v33h-1zM871 354h2v1h-2zM874 350h2v1h-2zM879 313h1v59h-1zM877 331h2v1h-2zM880 362h2v1h-2zM885 272h1v82h-1zM883 352h2v1h-2zM886 281h2v1h-2zM891 275h1v31h-1zM889 286h2v1h-2zM892 300h2v1h-2zM897 263h1v49h-1zM895 281h2v1h-2zM898 306h2v1h-2zM903 272h1v32h-1zM901 279h2v1h-2zM904 287h2v1h-2zM909 268h1v35h-1zM907 298h2v1h-2zM910 296h2v1h-2zM915 234h1v44h-1zM913 277h2v1h-2zM916 241h2v1h-2zM921 204h1v44h-1zM919 229h2v1h-2zM922 221h2v1h-2zM927 218h1v38h-1zM925 220h2v1h-2zM928 233h2v1h-2zM933 242h1v36h-1zM931 246h2v1h-2zM934 263h2v1h-2zM939 233h1v21h-1zM937 246h2v1h-2zM940 238h2v1h-2zM945 209h1v26h-1zM943 233h2v1h-2zM946 216h2v1h-2zM951 201h1v30h-1zM949 228h2v1h-2zM952 214h2v1h-2zM957 188h1v36h-1zM955 198h2v1h-2zM958 200h2v1h-2zM963 179h1v42h-1zM961 186h2v1h-2zM964 203h2v1h-2zM969 192h1v34h-1zM967 219h2v1h-2zM970 218h2v1h-2zM975 249h1v50h-1zM973 250h2v1h-2zM976 271h2v1h-2zM981 238h1v41h-1zM979 263h2v1h-2zM982 249h2v1h-2zM987 211h1v58h-1zM985 227h2v1h-2zM988 268h2v1h-2zM993 254h1v86h-1zM991 268h2v1h-2zM994 334h2v1h-2zM999 305h1v23h-1zM997 316h2v1h-2zM1000 305h2v1h-2zM1005 229h1v45h-1zM1003 273h2v1h-2zM1006 234h2v1h-2zM1011 226h1v49h-1zM1009 238h2v1h-2zM1012 270h2v1h-2zM1017 303h1v49h-1zM1015 325h2v1h-2zM1018 328h2v1h-2zM1023 271h1v65h-1zM1021 322h2v1h-2zM1024 281h2v1h-2zM1029 231h1v41h-1zM1027 266h2v1h-2zM1030 256h2v1h-2zM1035 241h1v139h-1zM1033 248h2v1h-2zM1036 379h2v1h-2zM1041 370h1v70h-1zM1039 380h2v1h-2zM1042 404h2v1h-2zM1047 394h1v42h-1zM1045 416h2v1h-2zM1048 426h2v1h-2zM1053 449h1v77h-1zM1051 490h2v1h-2zM1054 492h2v1h-2zM1059 370h1v60h-1zM1057 421h2v1h-2zM1060 386h2v1h-2zM1065 381h1v38h-1zM1063 418h2v1h-2zM1066 383h2v1h-2zM1071 332h1v63h-1zM1069 394h2v1h-2zM1072 358h2v1h-2zM1077 321h1v67h-1zM1075 329h2v1h-2zM1078 369h2v1h-2zM1083 366h1v51h-1zM1081 383h2v1h-2zM1084 412h2v1h-2zM1089 409h1v59h-1zM1087 461h2v1h-2zM1090 416h2v1h-2zM1095 374h1v30h-1zM1093 394h2v1h-2zM1096 386h2v1h-2zM1101 421h1v81h-1zM1099 423h2v1h-2zM1102 483h2v1h-2zM1107 461h1v88h-1zM1105 498h2v1h-2zM1108 548h2v1h-2zM1113 512h1v80h-1zM1111 532h2v1h-2zM1114 520h2v1h-2z"/>
<clipPath id="cc"><rect x="33" y="104" width="1185" height="625"/></clipPath>
<g clip-path="url(#cc)" fill="none" stroke="#f00" shape-rendering="crispEdges">
<path d="M33.00 163.55 C48.67 161.47 62.50 159.93 80.00 157.30 C97.50 154.68 121.33 150.30 138.00 147.80 C154.67 145.30 165.00 144.34 180.00 142.30 C195.00 140.26 211.33 137.63 228.00 135.55 C244.67 133.47 265.00 131.51 280.00 129.80 C295.00 128.09 306.33 126.72 318.00 125.30 C329.67 123.88 340.50 122.34 350.00 121.30 C359.50 120.26 366.33 119.72 375.00 119.05 C383.67 118.38 391.17 117.93 402.00 117.30 C412.83 116.68 427.83 115.80 440.00 115.30 C452.17 114.80 466.33 114.55 475.00 114.30 C483.67 114.05 486.17 113.80 492.00 113.80 C497.83 113.80 502.00 114.01 510.00 114.30 C518.00 114.59 531.00 115.05 540.00 115.55 C549.00 116.05 554.00 116.51 564.00 117.30 C574.00 118.09 589.00 119.34 600.00 120.30 C611.00 121.26 621.00 122.18 630.00 123.05 C639.00 123.93 647.33 124.93 654.00 125.55 C660.67 126.18 662.33 126.09 670.00 126.80 C677.67 127.51 687.67 128.76 700.00 129.80 C712.33 130.84 730.67 132.26 744.00 133.05 C757.33 133.84 769.00 134.13 780.00 134.55 C791.00 134.97 801.00 135.43 810.00 135.55 C819.00 135.68 825.67 135.43 834.00 135.30 C842.33 135.18 850.67 135.01 860.00 134.80 C869.33 134.59 880.33 134.43 890.00 134.05 C899.67 133.68 908.00 133.26 918.00 132.55 C928.00 131.84 938.00 130.88 950.00 129.80 C962.00 128.72 981.33 126.88 990.00 126.05 C998.67 125.22 993.67 125.63 1002.00 124.80 C1010.33 123.97 1026.00 122.59 1040.00 121.05 C1054.00 119.51 1072.67 117.09 1086.00 115.55 C1099.33 114.01 1109.33 113.18 1120.00 111.80 C1130.67 110.43 1140.67 108.55 1150.00 107.30 C1159.33 106.05 1167.67 105.34 1176.00 104.30 C1184.33 103.26 1193.00 101.97 1200.00 101.05 C1207.00 100.13 1212.00 99.55 1218.00 98.80" stroke-width="2"/>
<path d="M33.00 262.35 C48.67 260.27 62.50 258.73 80.00 256.10 C97.50 253.48 121.33 249.10 138.00 246.60 C154.67 244.10 165.00 243.14 180.00 241.10 C195.00 239.06 211.33 236.43 228.00 234.35 C244.67 232.27 265.00 230.31 280.00 228.60 C295.00 226.89 306.33 225.52 318.00 224.10 C329.67 222.68 340.50 221.14 350.00 220.10 C359.50 219.06 366.33 218.52 375.00 217.85 C383.67 217.18 391.17 216.73 402.00 216.10 C412.83 215.48 427.83 214.60 440.00 214.10 C452.17 213.60 466.33 213.35 475.00 213.10 C483.67 212.85 486.17 212.60 492.00 212.60 C497.83 212.60 502.00 212.81 510.00 213.10 C518.00 213.39 531.00 213.85 540.00 214.35 C549.00 214.85 554.00 215.31 564.00 216.10 C574.00 216.89 589.00 218.14 600.00 219.10 C611.00 220.06 621.00 220.98 630.00 221.85 C639.00 222.73 647.33 223.73 654.00 224.35 C660.67 224.98 662.33 224.89 670.00 225.60 C677.67 226.31 687.67 227.56 700.00 228.60 C712.33 229.64 730.67 231.06 744.00 231.85 C757.33 232.64 769.00 232.93 780.00 233.35 C791.00 233.77 801.00 234.23 810.00 234.35 C819.00 234.48 825.67 234.23 834.00 234.10 C842.33 233.98 850.67 233.81 860.00 233.60 C869.33 233.39 880.33 233.23 890.00 232.85 C899.67 232.48 908.00 232.06 918.00 231.35 C928.00 230.64 938.00 229.68 950.00 228.60 C962.00 227.52 981.33 225.68 990.00 224.85 C998.67 224.02 993.67 224.43 1002.00 223.60 C1010.33 222.77 1026.00 221.39 1040.00 219.85 C1054.00 218.31 1072.67 215.89 1086.00 214.35 C1099.33 212.81 1109.33 211.98 1120.00 210.60 C1130.67 209.23 1140.67 207.35 1150.00 206.10 C1159.33 204.85 1167.67 204.14 1176.00 203.10 C1184.33 202.06 1193.00 200.77 1200.00 199.85 C1207.00 198.93 1212.00 198.35 1218.00 197.60" stroke-width="1"/>
<path d="M33.00 361.15 C48.67 359.07 62.50 357.52 80.00 354.90 C97.50 352.27 121.33 347.90 138.00 345.40 C154.67 342.90 165.00 341.94 180.00 339.90 C195.00 337.86 211.33 335.23 228.00 333.15 C244.67 331.07 265.00 329.11 280.00 327.40 C295.00 325.69 306.33 324.32 318.00 322.90 C329.67 321.48 340.50 319.94 350.00 318.90 C359.50 317.86 366.33 317.32 375.00 316.65 C383.67 315.98 391.17 315.52 402.00 314.90 C412.83 314.27 427.83 313.40 440.00 312.90 C452.17 312.40 466.33 312.15 475.00 311.90 C483.67 311.65 486.17 311.40 492.00 311.40 C497.83 311.40 502.00 311.61 510.00 311.90 C518.00 312.19 531.00 312.65 540.00 313.15 C549.00 313.65 554.00 314.11 564.00 314.90 C574.00 315.69 589.00 316.94 600.00 317.90 C611.00 318.86 621.00 319.77 630.00 320.65 C639.00 321.52 647.33 322.52 654.00 323.15 C660.67 323.77 662.33 323.69 670.00 324.40 C677.67 325.11 687.67 326.36 700.00 327.40 C712.33 328.44 730.67 329.86 744.00 330.65 C757.33 331.44 769.00 331.73 780.00 332.15 C791.00 332.57 801.00 333.02 810.00 333.15 C819.00 333.27 825.67 333.02 834.00 332.90 C842.33 332.77 850.67 332.61 860.00 332.40 C869.33 332.19 880.33 332.02 890.00 331.65 C899.67 331.27 908.00 330.86 918.00 330.15 C928.00 329.44 938.00 328.48 950.00 327.40 C962.00 326.32 981.33 324.48 990.00 323.65 C998.67 322.82 993.67 323.23 1002.00 322.40 C1010.33 321.57 1026.00 320.19 1040.00 318.65 C1054.00 317.11 1072.67 314.69 1086.00 313.15 C1099.33 311.61 1109.33 310.77 1120.00 309.40 C1130.67 308.02 1140.67 306.15 1150.00 304.90 C1159.33 303.65 1167.67 302.94 1176.00 301.90 C1184.33 300.86 1193.00 299.57 1200.00 298.65 C1207.00 297.73 1212.00 297.15 1218.00 296.40" stroke-width="1"/>
<path d="M33.00 459.95 C48.67 457.87 62.50 456.32 80.00 453.70 C97.50 451.07 121.33 446.70 138.00 444.20 C154.67 441.70 165.00 440.74 180.00 438.70 C195.00 436.66 211.33 434.03 228.00 431.95 C244.67 429.87 265.00 427.91 280.00 426.20 C295.00 424.49 306.33 423.12 318.00 421.70 C329.67 420.28 340.50 418.74 350.00 417.70 C359.50 416.66 366.33 416.12 375.00 415.45 C383.67 414.78 391.17 414.32 402.00 413.70 C412.83 413.07 427.83 412.20 440.00 411.70 C452.17 411.20 466.33 410.95 475.00 410.70 C483.67 410.45 486.17 410.20 492.00 410.20 C497.83 410.20 502.00 410.41 510.00 410.70 C518.00 410.99 531.00 411.45 540.00 411.95 C549.00 412.45 554.00 412.91 564.00 413.70 C574.00 414.49 589.00 415.74 600.00 416.70 C611.00 417.66 621.00 418.57 630.00 419.45 C639.00 420.32 647.33 421.32 654.00 421.95 C660.67 422.57 662.33 422.49 670.00 423.20 C677.67 423.91 687.67 425.16 700.00 426.20 C712.33 427.24 730.67 428.66 744.00 429.45 C757.33 430.24 769.00 430.53 780.00 430.95 C791.00 431.37 801.00 431.82 810.00 431.95 C819.00 432.07 825.67 431.82 834.00 431.70 C842.33 431.57 850.67 431.41 860.00 431.20 C869.33 430.99 880.33 430.82 890.00 430.45 C899.67 430.07 908.00 429.66 918.00 428.95 C928.00 428.24 938.00 427.28 950.00 426.20 C962.00 425.12 981.33 423.28 990.00 422.45 C998.67 421.62 993.67 422.03 1002.00 421.20 C1010.33 420.37 1026.00 418.99 1040.00 417.45 C1054.00 415.91 1072.67 413.49 1086.00 411.95 C1099.33 410.41 1109.33 409.57 1120.00 408.20 C1130.67 406.82 1140.67 404.95 1150.00 403.70 C1159.33 402.45 1167.67 401.74 1176.00 400.70 C1184.33 399.66 1193.00 398.37 1200.00 397.45 C1207.00 396.53 1212.00 395.95 1218.00 395.20" stroke-width="1"/>
<path d="M33.00 558.75 C48.67 556.67 62.50 555.12 80.00 552.50 C97.50 549.88 121.33 545.50 138.00 543.00 C154.67 540.50 165.00 539.54 180.00 537.50 C195.00 535.46 211.33 532.83 228.00 530.75 C244.67 528.67 265.00 526.71 280.00 525.00 C295.00 523.29 306.33 521.92 318.00 520.50 C329.67 519.08 340.50 517.54 350.00 516.50 C359.50 515.46 366.33 514.92 375.00 514.25 C383.67 513.58 391.17 513.12 402.00 512.50 C412.83 511.88 427.83 511.00 440.00 510.50 C452.17 510.00 466.33 509.75 475.00 509.50 C483.67 509.25 486.17 509.00 492.00 509.00 C497.83 509.00 502.00 509.21 510.00 509.50 C518.00 509.79 531.00 510.25 540.00 510.75 C549.00 511.25 554.00 511.71 564.00 512.50 C574.00 513.29 589.00 514.54 600.00 515.50 C611.00 516.46 621.00 517.38 630.00 518.25 C639.00 519.12 647.33 520.12 654.00 520.75 C660.67 521.38 662.33 521.29 670.00 522.00 C677.67 522.71 687.67 523.96 700.00 525.00 C712.33 526.04 730.67 527.46 744.00 528.25 C757.33 529.04 769.00 529.33 780.00 529.75 C791.00 530.17 801.00 530.62 810.00 530.75 C819.00 530.88 825.67 530.62 834.00 530.50 C842.33 530.38 850.67 530.21 860.00 530.00 C869.33 529.79 880.33 529.62 890.00 529.25 C899.67 528.88 908.00 528.46 918.00 527.75 C928.00 527.04 938.00 526.08 950.00 525.00 C962.00 523.92 981.33 522.08 990.00 521.25 C998.67 520.42 993.67 520.83 1002.00 520.00 C1010.33 519.17 1026.00 517.79 1040.00 516.25 C1054.00 514.71 1072.67 512.29 1086.00 510.75 C1099.33 509.21 1109.33 508.38 1120.00 507.00 C1130.67 505.62 1140.67 503.75 1150.00 502.50 C1159.33 501.25 1167.67 500.54 1176.00 499.50 C1184.33 498.46 1193.00 497.17 1200.00 496.25 C1207.00 495.33 1212.00 494.75 1218.00 494.00" stroke-width="2"/>
<path d="M33.00 657.55 C48.67 655.47 62.50 653.92 80.00 651.30 C97.50 648.67 121.33 644.30 138.00 641.80 C154.67 639.30 165.00 638.34 180.00 636.30 C195.00 634.26 211.33 631.63 228.00 629.55 C244.67 627.47 265.00 625.51 280.00 623.80 C295.00 622.09 306.33 620.72 318.00 619.30 C329.67 617.88 340.50 616.34 350.00 615.30 C359.50 614.26 366.33 613.72 375.00 613.05 C383.67 612.38 391.17 611.92 402.00 611.30 C412.83 610.67 427.83 609.80 440.00 609.30 C452.17 608.80 466.33 608.55 475.00 608.30 C483.67 608.05 486.17 607.80 492.00 607.80 C497.83 607.80 502.00 608.01 510.00 608.30 C518.00 608.59 531.00 609.05 540.00 609.55 C549.00 610.05 554.00 610.51 564.00 611.30 C574.00 612.09 589.00 613.34 600.00 614.30 C611.00 615.26 621.00 616.17 630.00 617.05 C639.00 617.92 647.33 618.92 654.00 619.55 C660.67 620.17 662.33 620.09 670.00 620.80 C677.67 621.51 687.67 622.76 700.00 623.80 C712.33 624.84 730.67 626.26 744.00 627.05 C757.33 627.84 769.00 628.13 780.00 628.55 C791.00 628.97 801.00 629.42 810.00 629.55 C819.00 629.67 825.67 629.42 834.00 629.30 C842.33 629.17 850.67 629.01 860.00 628.80 C869.33 628.59 880.33 628.42 890.00 628.05 C899.67 627.67 908.00 627.26 918.00 626.55 C928.00 625.84 938.00 624.88 950.00 623.80 C962.00 622.72 981.33 620.88 990.00 620.05 C998.67 619.22 993.67 619.63 1002.00 618.80 C1010.33 617.97 1026.00 616.59 1040.00 615.05 C1054.00 613.51 1072.67 611.09 1086.00 609.55 C1099.33 608.01 1109.33 607.17 1120.00 605.80 C1130.67 604.42 1140.67 602.55 1150.00 601.30 C1159.33 600.05 1167.67 599.34 1176.00 598.30 C1184.33 597.26 1193.00 595.97 1200.00 595.05 C1207.00 594.13 1212.00 593.55 1218.00 592.80" stroke-width="1"/>
<path d="M33.00 756.35 C48.67 754.27 62.50 752.73 80.00 750.10 C97.50 747.48 121.33 743.10 138.00 740.60 C154.67 738.10 165.00 737.14 180.00 735.10 C195.00 733.06 211.33 730.43 228.00 728.35 C244.67 726.27 265.00 724.31 280.00 722.60 C295.00 720.89 306.33 719.52 318.00 718.10 C329.67 716.68 340.50 715.14 350.00 714.10 C359.50 713.06 366.33 712.52 375.00 711.85 C383.67 711.18 391.17 710.73 402.00 710.10 C412.83 709.48 427.83 708.60 440.00 708.10 C452.17 707.60 466.33 707.35 475.00 707.10 C483.67 706.85 486.17 706.60 492.00 706.60 C497.83 706.60 502.00 706.81 510.00 707.10 C518.00 707.39 531.00 707.85 540.00 708.35 C549.00 708.85 554.00 709.31 564.00 710.10 C574.00 710.89 589.00 712.14 600.00 713.10 C611.00 714.06 621.00 714.98 630.00 715.85 C639.00 716.73 647.33 717.73 654.00 718.35 C660.67 718.98 662.33 718.89 670.00 719.60 C677.67 720.31 687.67 721.56 700.00 722.60 C712.33 723.64 730.67 725.06 744.00 725.85 C757.33 726.64 769.00 726.93 780.00 727.35 C791.00 727.77 801.00 728.23 810.00 728.35 C819.00 728.48 825.67 728.23 834.00 728.10 C842.33 727.98 850.67 727.81 860.00 727.60 C869.33 727.39 880.33 727.23 890.00 726.85 C899.67 726.48 908.00 726.06 918.00 725.35 C928.00 724.64 938.00 723.68 950.00 722.60 C962.00 721.52 981.33 719.68 990.00 718.85 C998.67 718.02 993.67 718.43 1002.00 717.60 C1010.33 716.77 1026.00 715.39 1040.00 713.85 C1054.00 712.31 1072.67 709.89 1086.00 708.35 C1099.33 706.81 1109.33 705.98 1120.00 704.60 C1130.67 703.23 1140.67 701.35 1150.00 700.10 C1159.33 698.85 1167.67 698.14 1176.00 697.10 C1184.33 696.06 1193.00 694.77 1200.00 693.85 C1207.00 692.93 1212.00 692.35 1218.00 691.60" stroke-width="1"/>
</g>
<g shape-rendering="crispEdges" fill="#fff">
<rect x="1220" y="180" width="4" height="1" fill="#c0c0c0"/>
<rect x="1220" y="290" width="4" height="1" fill="#c0c0c0"/>
<rect x="1220" y="400" width="4" height="1" fill="#c0c0c0"/>
<rect x="1220" y="509" width="4" height="1" fill="#c0c0c0"/>
<rect x="1220" y="619" width="4" height="1" fill="#c0c0c0"/>
<rect x="1220" y="729" width="4" height="1" fill="#c0c0c0"/>
</g>
<g shape-rendering="crispEdges">
<rect x="1209" y="106" width="9" height="7" fill="#0f0"/>
<rect x="1209" y="113" width="9" height="8" fill="#008000"/><rect x="1210" y="114" width="7" height="6" fill="#fff"/><rect x="1211" y="115" width="5" height="4" fill="#000"/><rect x="1212" y="116" width="3" height="2" fill="#fff"/>
<rect x="1209" y="721" width="9" height="8" fill="#0f0"/>
<rect x="1209" y="411" width="9" height="13" fill="#008000"/><rect x="1210" y="412" width="8" height="11" fill="#fff"/>
<rect x="1118" y="727" width="4" height="6" fill="#ff0"/>
<rect x="1221" y="513" width="29" height="14" fill="#fff"/>
<rect x="1235" y="733" width="14" height="14" fill="#c0c0c0"/><rect x="1248" y="733" width="1" height="14" fill="#fff"/><rect x="1235" y="746" width="14" height="1" fill="#808080"/>
</g>
<circle cx="1213.5" cy="417.5" r="3" fill="none" stroke="#000" stroke-width="1.2"/>
<g font-family="Liberation Sans, Arial, sans-serif" font-size="11px" fill="#fff">
<text x="33" y="117" textLength="160" lengthAdjust="spacingAndGlyphs" font-size="10.5px">FIBONACCI/GALACTIC TRADER(TM)</text>
<text x="44" y="136" fill="#f00" textLength="149" lengthAdjust="spacingAndGlyphs" font-size="10.5px">[005] Mars Price Line G 90 N -1</text>
<text x="43" y="146" fill="#0f0" textLength="163" lengthAdjust="spacingAndGlyphs" font-size="10.5px">[006] Jupiter Price Line G 180 N -1</text>
<text x="48" y="743" textLength="56" lengthAdjust="spacingAndGlyphs">2009-09-07</text>
<text x="138" y="743" textLength="56" lengthAdjust="spacingAndGlyphs">2009-09-28</text>
<text x="228" y="743" textLength="56" lengthAdjust="spacingAndGlyphs">2009-10-19</text>
<text x="318" y="743" textLength="56" lengthAdjust="spacingAndGlyphs">2009-11-09</text>
<text x="402" y="743" textLength="56" lengthAdjust="spacingAndGlyphs">2009-11-30</text>
<text x="492" y="743" textLength="56" lengthAdjust="spacingAndGlyphs">2009-12-21</text>
<text x="564" y="743" textLength="56" lengthAdjust="spacingAndGlyphs">2010-01-11</text>
<text x="654" y="743" textLength="56" lengthAdjust="spacingAndGlyphs">2010-02-01</text>
<text x="744" y="743" textLength="56" lengthAdjust="spacingAndGlyphs">2010-02-22</text>
<text x="834" y="743" textLength="56" lengthAdjust="spacingAndGlyphs">2010-03-15</text>
<text x="918" y="743" textLength="56" lengthAdjust="spacingAndGlyphs">2010-04-06</text>
<text x="1002" y="743" textLength="56" lengthAdjust="spacingAndGlyphs">2010-04-26</text>
<text x="1086" y="743" textLength="56" lengthAdjust="spacingAndGlyphs">2010-05-17</text>
<text x="1176" y="743" textLength="42" lengthAdjust="spacingAndGlyphs">2010-06-</text>
<text x="1230" y="183">2600</text>
<text x="1230" y="293">2500</text>
<text x="1230" y="403">2400</text>
<text x="1230" y="512">2300</text>
<text x="1230" y="622">2200</text>
<text x="1230" y="732">2100</text>
<text x="1224" y="524" fill="#000">2290</text>
<text x="1236" y="744" fill="#000" font-size="11px" textLength="11.5" lengthAdjust="spacingAndGlyphs">TF</text>
</g>
</svg>
<svg class="abs" style="left:0px;top:103px" width="29" height="666" viewBox="0 103 29 666" ><g shape-rendering="crispEdges"><rect x="28" y="103" width="1" height="666" fill="#fbfbfb" /><rect x="1" y="164" width="27" height="1" fill="#fff" /><rect x="1" y="164" width="1" height="384" fill="#fff" /><rect x="4" y="168" width="23" height="2" fill="#fff" /><rect x="4" y="170" width="23" height="1" fill="#a0a0a0" /><rect x="26" y="168" width="1" height="3" fill="#a0a0a0" /><rect x="27" y="164" width="1" height="385" fill="#a0a0a0" /><rect x="1" y="548" width="27" height="1" fill="#a0a0a0" /><rect x="4" y="250" width="19" height="1" fill="#a0a0a0" /><rect x="4" y="303" width="19" height="1" fill="#a0a0a0" /><rect x="4" y="405" width="19" height="1" fill="#a0a0a0" /><rect x="4" y="483" width="19" height="1" fill="#a0a0a0" /><path d="M11 180v12l3-3 2 5 2-1-2-4.500h4.500z" fill="#000"/><rect x="14" y="202" width="2" height="18" fill="#000" /><rect x="6" y="210" width="18" height="2" fill="#000" /><rect x="3" y="224" width="23" height="23" fill="#fafafa" /><rect x="3" y="224" width="23" height="1" fill="#808080" /><rect x="3" y="224" width="1" height="23" fill="#808080" /><rect x="3" y="246" width="24" height="1" fill="#fff" /><rect x="26" y="224" width="1" height="23" fill="#fff" /><path d="M21.500 231.500h-6q-4 0-4 5.500t4 5.500h6v-3.500h-5q-1.500 0-1.500-2t1.500-2h5z" fill="#f00" stroke="#000"/><rect x="19" y="232" width="2" height="3" fill="#fff" /><rect x="19" y="239" width="2" height="3" fill="#fff" /></g><g shape-rendering="crispEdges"><rect x="7.500" y="263.5" width="8" height="9" fill="#fff" stroke="#000"/><rect x="9" y="262" width="5" height="2" fill="#000" /></g><circle cx="14.500" cy="263" r="4.500" fill="#fff" fill-opacity=".6" stroke="#000" stroke-width="1.300"/><path d="M18 266.5L22.500 271.5" stroke="#000" stroke-width="2.200"/><path d="M11.500 262.5h5M12.500 264.5h3" stroke="#0cc" stroke-width="1"/><g shape-rendering="crispEdges"><rect x="7.500" y="287.5" width="8" height="9" fill="#d8d8d8" stroke="#a0a0a0"/><rect x="9" y="286" width="5" height="2" fill="#a0a0a0" /></g><circle cx="14.500" cy="287" r="4.500" fill="#d8d8d8" fill-opacity=".6" stroke="#a0a0a0" stroke-width="1.300"/><path d="M18 290.5L22.500 295.5" stroke="#a0a0a0" stroke-width="2.200"/><path d="M11.500 286.5h5M12.500 288.5h3" stroke="#b8b8b8" stroke-width="1"/><path d="M8 312.500H22" stroke="#000" stroke-width="1.300"/><path d="M8.500 313.500L20 325.500" stroke="#000" stroke-width="4.200" stroke-linecap="round"/><path d="M10 315L20 325.500" stroke="#0e0" stroke-width="2.200" stroke-linecap="round"/><circle cx="8.800" cy="313.800" r="1" fill="#fff"/><path d="M8 336.500H23" stroke="#000" stroke-width="1.300"/><path d="M8.500 337.500L20 349.500" stroke="#000" stroke-width="4.200" stroke-linecap="round"/><path d="M10 339L20 349.500" stroke="#00f" stroke-width="2.200" stroke-linecap="round"/><circle cx="8.800" cy="337.800" r="1" fill="#fff"/><path d="M7.500 360V375" stroke="#000" stroke-width="1.500"/><path d="M9.500 361.500L21 372.500" stroke="#000" stroke-width="4.200" stroke-linecap="round"/><path d="M11 363L21 372.500" stroke="#00f" stroke-width="2.200" stroke-linecap="round"/><circle cx="9.500" cy="361.500" r="1" fill="#fff"/><path d="M6 395.500L19.500 382.500" stroke="#000" stroke-width="1.300"/><path d="M17.500 398.500v-9l2.200-4 2.300 4v9z" fill="#0ff" stroke="#000" stroke-width="1"/><path d="M18.800 388.500l1-2.500 1 2.500z" fill="#ff0"/><g font-family='"Liberation Sans",Arial,sans-serif'><text x="6.5" y="424.5" font-size="12.5px" fill="#000" textLength="17.5" lengthAdjust="spacingAndGlyphs">abc</text><text x="6.5" y="448" font-size="12.5px" fill="#000" textLength="17.5" lengthAdjust="spacingAndGlyphs">abc</text><text x="11.5" y="474.5" font-size="14px" fill="#00f" font-weight="bold" textLength="8.5" lengthAdjust="spacingAndGlyphs">F</text></g><path d="M8 437L23 452M23 437L8 452" stroke="#f00" stroke-width="1.300"/><circle cx="15" cy="498.500" r="7.300" fill="none" stroke="#000" stroke-width="1.600"/><ellipse cx="15" cy="523.500" rx="8.300" ry="6.200" fill="none" stroke="#000" stroke-width="1.600"/><path d="M7 537v7l-3.500-3.500z" fill="#000"/></svg>
<svg class="abs" style="left:1251px;top:103px" width="29" height="666" viewBox="1251 103 29 666" ><g shape-rendering="crispEdges"><rect x="1251" y="103" width="2" height="644" fill="#fbfbfb" /><rect x="1254" y="107" width="23" height="2" fill="#fff" /><rect x="1255" y="109" width="23" height="1" fill="#a0a0a0" /><rect x="1277" y="107" width="1" height="3" fill="#a0a0a0" /><rect x="1279" y="103" width="1" height="457" fill="#a0a0a0" /><rect x="1252" y="559" width="28" height="1" fill="#a0a0a0" /><rect x="1258" y="263" width="17" height="1" fill="#000" /><rect x="1258" y="266" width="17" height="1" fill="#000" /><rect x="1258" y="270" width="17" height="1" fill="#000" /><rect x="1258" y="276" width="17" height="1" fill="#000" /><rect x="1258" y="287" width="1" height="15" fill="#00f" /><rect x="1261" y="287" width="1" height="15" fill="#00f" /><rect x="1264" y="287" width="1" height="15" fill="#00f" /><rect x="1267" y="287" width="1" height="15" fill="#00f" /><rect x="1272" y="287" width="1" height="15" fill="#00f" /><rect x="1258" y="311" width="1" height="15" fill="#f00" /><rect x="1263" y="311" width="1" height="15" fill="#f00" /><rect x="1268" y="311" width="1" height="15" fill="#f00" /><rect x="1273" y="311" width="1" height="15" fill="#f00" /><rect x="1257" y="345" width="1" height="6" fill="#00f" /><rect x="1258" y="347" width="1" height="1" fill="#00f" /><rect x="1260" y="342" width="1" height="6" fill="#00f" /><rect x="1261" y="344" width="1" height="1" fill="#00f" /><rect x="1263" y="339" width="1" height="6" fill="#00f" /><rect x="1264" y="341" width="1" height="1" fill="#00f" /><rect x="1266" y="337" width="1" height="6" fill="#00f" /><rect x="1267" y="339" width="1" height="1" fill="#00f" /><rect x="1268" y="333" width="8" height="5" fill="#f00" /><rect x="1269" y="334" width="6" height="2" fill="#fff" /><rect x="1270" y="334" width="1" height="1" fill="#000" /><rect x="1272" y="335" width="1" height="1" fill="#000" /><rect x="1274" y="334" width="1" height="1" fill="#000" /><rect x="1272" y="339" width="4" height="5" fill="#f00" /><rect x="1273" y="340" width="1" height="2" fill="#fff" /><rect x="1257" y="407" width="18" height="1" fill="#00f" /><rect x="1257" y="412" width="18" height="1" fill="#f00" /><rect x="1257" y="415" width="18" height="1" fill="#00f" /><rect x="1257" y="420" width="18" height="1" fill="#f00" /><rect x="1265" y="245" width="11" height="1" fill="#f00" /><rect x="1269" y="249" width="7" height="1" fill="#00f" /><rect x="1272" y="252" width="4" height="1" fill="#008000" /><rect x="1259" y="396" width="1" height="1" fill="#c00" /><rect x="1261" y="396" width="1" height="1" fill="#c00" /><rect x="1263" y="396" width="1" height="1" fill="#c00" /><rect x="1265" y="396" width="1" height="1" fill="#c00" /><rect x="1267" y="396" width="1" height="1" fill="#c00" /><rect x="1267" y="385" width="1" height="1" fill="#c00" /><rect x="1267" y="387" width="1" height="1" fill="#c00" /><rect x="1267" y="389" width="1" height="1" fill="#c00" /><rect x="1267" y="391" width="1" height="1" fill="#c00" /><rect x="1267" y="393" width="1" height="1" fill="#c00" /><rect x="1267" y="395" width="1" height="1" fill="#c00" /></g><g fill="none" stroke-width="1.300"><path d="M1262 119L1275 127" stroke="#f00" stroke-width="1.500"/><path d="M1257.500 141.500L1275 148.500" stroke="#f00" stroke-width="1.500"/><path d="M1257.500 141.500L1275 158" stroke="#000" stroke-width="1.500"/><path d="M1257.500 141.500L1266 158" stroke="#0e0" stroke-width="1.500"/><path d="M1257 170a9 9 0 0 0 18 0" stroke="#000"/><path d="M1258.800 170a7.200 7.200 0 0 0 14.400 0" stroke="#f0f" stroke-width="1.500"/><path d="M1260.500 170a5.500 5.500 0 0 0 11 0" stroke="#0c0"/><path d="M1257 179.500L1267 169.500" stroke="#000" stroke-width="1.100"/><path d="M1258 220L1267.500 212.500M1260 228.500L1275 213.500M1270 230L1275 226" stroke="#000"/><path d="M1259 221L1268 230" stroke="#808080"/><path d="M1262 244L1273 253" stroke="#000" stroke-width="1.600"/><path d="M1261 365L1268 357.500M1260 373L1274 359.500M1269 372L1275 366" stroke="#000"/><path d="M1259 395.500L1268 383" stroke="#00f"/><path d="M1269 395L1273 385" stroke="#000"/><path d="M1259 444L1273 431M1259 444L1274.500 436M1259 444L1274 441.500M1259 444L1268 431M1259 444L1263.500 433" stroke="#000" stroke-width="1.100"/><path d="M1257.500 445l4-3.500 1 2.500z" fill="#000" stroke="none"/></g><g font-family='"Liberation Sans",Arial,sans-serif'><text x="1256.500" y="133" font-family='"Liberation Serif",serif' font-weight="bold" font-size="17px" textLength="12" lengthAdjust="spacingAndGlyphs">A</text><text x="1258.5" y="203" font-size="13.5px" fill="#000080" font-weight="bold" textLength="15.5" lengthAdjust="spacingAndGlyphs">DL</text><text x="1260.5" y="421" font-size="16px" fill="#008000" font-weight="bold" textLength="11" lengthAdjust="spacingAndGlyphs">G</text><text x="1258.5" y="515.5" font-size="14px" fill="#000" font-weight="bold" textLength="16" lengthAdjust="spacingAndGlyphs">LS</text><text x="1260.5" y="539.5" font-size="14px" fill="#000" font-weight="bold" textLength="12.5" lengthAdjust="spacingAndGlyphs">Bi</text></g><text x="1256.500" y="250.500" font-family='"Liberation Serif",serif' font-weight="bold" font-size="15px" textLength="5" lengthAdjust="spacingAndGlyphs">I</text><g font-family='"Liberation Mono",monospace' font-size="15px"><text x="1257" y="466.500" fill="#800080" textLength="8.5" lengthAdjust="spacingAndGlyphs">G</text><text x="1266.500" y="466.500" fill="#008000" textLength="7.5" lengthAdjust="spacingAndGlyphs">9</text><text x="1257" y="491" fill="#800080" textLength="17" lengthAdjust="spacingAndGlyphs">GS</text></g><path d="M1258.500 549v7l-3.500-3.500z" fill="#000"/></svg>
<svg class="abs" style="left:0px;top:747px" width="1280" height="22" viewBox="0 747 1280 22" ><g shape-rendering="crispEdges"><rect x="28" y="747" width="1" height="22" fill="#fff" /><rect x="29" y="747" width="1" height="20" fill="#696969" /><rect x="30" y="747" width="1221" height="1" fill="#f8f8f8" /><rect x="30" y="748" width="1221" height="1.5" fill="#fff" /><rect x="34" y="750" width="156" height="1" fill="#a0a0a0" /><rect x="34" y="750" width="1" height="16" fill="#a0a0a0" /><rect x="35" y="751" width="154" height="1" fill="#696969" /><rect x="35" y="751" width="1" height="14" fill="#696969" /><rect x="34" y="766" width="157" height="1" fill="#fff" /><rect x="190" y="750" width="1" height="17" fill="#fff" /><rect x="35" y="765" width="155" height="1" fill="#e3e3e3" /><rect x="189" y="751" width="1" height="15" fill="#e3e3e3" /><rect x="1019" y="750" width="231" height="1" fill="#a0a0a0" /><rect x="1019" y="750" width="1" height="16" fill="#a0a0a0" /><rect x="1020" y="751" width="229" height="1" fill="#696969" /><rect x="1020" y="751" width="1" height="14" fill="#696969" /><rect x="1019" y="766" width="232" height="1" fill="#fff" /><rect x="1250" y="750" width="1" height="17" fill="#fff" /><rect x="1020" y="765" width="230" height="1" fill="#e3e3e3" /><rect x="1249" y="751" width="1" height="15" fill="#e3e3e3" /><rect x="1251" y="747" width="1" height="22" fill="#a0a0a0" /></g></svg>
<div class="abs" style="left:0;top:769px;width:1280px;height:31px;background:linear-gradient(180deg,#3e4042 0,#3e4042 2px,#8e9296 2px,#8e9296 3px,#787d82 3px,#3b3f44 16px,#04070b 16px,#080b10 30px,#20242a 30px)"></div>
<div class="abs" style="left:0;top:768px;width:1280px;height:1px;background:#fff"></div>
<svg class="abs" style="left:0px;top:764px" width="1280" height="36" viewBox="0 764 1280 36" ><defs><radialGradient id="orb" cx=".5" cy=".35" r=".7"><stop offset="0" stop-color="#6fb4dc"/><stop offset=".55" stop-color="#1d5f96"/><stop offset="1" stop-color="#0b2c54"/></radialGradient><linearGradient id="tb" x1="0" y1="0" x2="0" y2="1"><stop offset="0" stop-color="#a6a8aa"/><stop offset=".5" stop-color="#585b5f"/><stop offset=".5" stop-color="#0a0d12"/><stop offset="1" stop-color="#0c0f14"/></linearGradient><linearGradient id="tba" x1="0" y1="0" x2="0" y2="1"><stop offset="0" stop-color="#3c3e42"/><stop offset=".5" stop-color="#232528"/><stop offset=".5" stop-color="#05070a"/><stop offset="1" stop-color="#07090c"/></linearGradient></defs><defs><linearGradient id="orb2" x1="0" y1="0" x2="0" y2="1"><stop offset="0" stop-color="#a9c0d2"/><stop offset=".42" stop-color="#4f7da2"/><stop offset=".46" stop-color="#0d4c84"/><stop offset=".75" stop-color="#0b5a9a"/><stop offset="1" stop-color="#12a8e8"/></linearGradient><radialGradient id="orbg" cx=".5" cy="1" r=".6"><stop offset="0" stop-color="#1ad0ff" stop-opacity=".95"/><stop offset="1" stop-color="#1ad0ff" stop-opacity="0"/></radialGradient></defs><circle cx="30" cy="786" r="21.300" fill="#05080c" opacity=".85"/><circle cx="30" cy="786" r="19.600" fill="url(#orb2)" stroke="#0b3c6e" stroke-width="1"/><circle cx="30" cy="786" r="19" fill="url(#orbg)"/><path d="M21.200 773q5-2 10 .300l-2.200 9.500q-5-2.200-9.700 0z" fill="#e8501c"/><path d="M23 773.500q4-1.300 7.500.200l-1.500 8q-4-1.500-7.500-.200z" fill="#f59b28" opacity=".55"/><path d="M32.300 775.300q5 2.600 10.300 0l-2.300 9.600q-5 2.800-10.300.100z" fill="#7db93a"/><path d="M19 784.300q4.800-2.200 9.600.100l-2.300 9.300q-4.800-2.600-9.600-.300z" fill="#2f8fdc"/><path d="M22 784.500q3-1 6 .300l-1.400 5q-3-1.300-6 0z" fill="#9fd4f8" opacity=".6"/><path d="M29.800 786q5 2.800 10 .200l-2.200 9.300q-5 2.300-10-.100z" fill="#f7b718"/><g shape-rendering="crispEdges"><rect x="64" y="776" width="1" height="1" fill="#d0d0d0" /><rect x="65" y="777" width="1" height="1" fill="#15171a" /><rect x="67" y="776" width="1" height="1" fill="#d0d0d0" /><rect x="68" y="777" width="1" height="1" fill="#15171a" /><rect x="70" y="776" width="1" height="1" fill="#d0d0d0" /><rect x="71" y="777" width="1" height="1" fill="#15171a" /><rect x="64" y="780" width="1" height="1" fill="#d0d0d0" /><rect x="65" y="781" width="1" height="1" fill="#15171a" /><rect x="67" y="780" width="1" height="1" fill="#d0d0d0" /><rect x="68" y="781" width="1" height="1" fill="#15171a" /><rect x="70" y="780" width="1" height="1" fill="#d0d0d0" /><rect x="71" y="781" width="1" height="1" fill="#15171a" /><rect x="64" y="784" width="1" height="1" fill="#d0d0d0" /><rect x="65" y="785" width="1" height="1" fill="#15171a" /><rect x="67" y="784" width="1" height="1" fill="#d0d0d0" /><rect x="68" y="785" width="1" height="1" fill="#15171a" /><rect x="70" y="784" width="1" height="1" fill="#d0d0d0" /><rect x="71" y="785" width="1" height="1" fill="#15171a" /><rect x="64" y="788" width="1" height="1" fill="#7c8084" /><rect x="65" y="789" width="1" height="1" fill="#15171a" /><rect x="67" y="788" width="1" height="1" fill="#7c8084" /><rect x="68" y="789" width="1" height="1" fill="#15171a" /><rect x="70" y="788" width="1" height="1" fill="#7c8084" /><rect x="71" y="789" width="1" height="1" fill="#15171a" /><rect x="64" y="792" width="1" height="1" fill="#7c8084" /><rect x="65" y="793" width="1" height="1" fill="#15171a" /><rect x="67" y="792" width="1" height="1" fill="#7c8084" /><rect x="68" y="793" width="1" height="1" fill="#15171a" /><rect x="70" y="792" width="1" height="1" fill="#7c8084" /><rect x="71" y="793" width="1" height="1" fill="#15171a" /><rect x="64" y="796" width="1" height="1" fill="#7c8084" /><rect x="65" y="797" width="1" height="1" fill="#15171a" /><rect x="67" y="796" width="1" height="1" fill="#7c8084" /><rect x="68" y="797" width="1" height="1" fill="#15171a" /><rect x="70" y="796" width="1" height="1" fill="#7c8084" /><rect x="71" y="797" width="1" height="1" fill="#15171a" /><rect x="418" y="776" width="1" height="1" fill="#d0d0d0" /><rect x="419" y="777" width="1" height="1" fill="#15171a" /><rect x="421" y="776" width="1" height="1" fill="#d0d0d0" /><rect x="422" y="777" width="1" height="1" fill="#15171a" /><rect x="424" y="776" width="1" height="1" fill="#d0d0d0" /><rect x="425" y="777" width="1" height="1" fill="#15171a" /><rect x="418" y="780" width="1" height="1" fill="#d0d0d0" /><rect x="419" y="781" width="1" height="1" fill="#15171a" /><rect x="421" y="780" width="1" height="1" fill="#d0d0d0" /><rect x="422" y="781" width="1" height="1" fill="#15171a" /><rect x="424" y="780" width="1" height="1" fill="#d0d0d0" /><rect x="425" y="781" width="1" height="1" fill="#15171a" /><rect x="418" y="784" width="1" height="1" fill="#d0d0d0" /><rect x="419" y="785" width="1" height="1" fill="#15171a" /><rect x="421" y="784" width="1" height="1" fill="#d0d0d0" /><rect x="422" y="785" width="1" height="1" fill="#15171a" /><rect x="424" y="784" width="1" height="1" fill="#d0d0d0" /><rect x="425" y="785" width="1" height="1" fill="#15171a" /><rect x="418" y="788" width="1" height="1" fill="#7c8084" /><rect x="419" y="789" width="1" height="1" fill="#15171a" /><rect x="421" y="788" width="1" height="1" fill="#7c8084" /><rect x="422" y="789" width="1" height="1" fill="#15171a" /><rect x="424" y="788" width="1" height="1" fill="#7c8084" /><rect x="425" y="789" width="1" height="1" fill="#15171a" /><rect x="418" y="792" width="1" height="1" fill="#7c8084" /><rect x="419" y="793" width="1" height="1" fill="#15171a" /><rect x="421" y="792" width="1" height="1" fill="#7c8084" /><rect x="422" y="793" width="1" height="1" fill="#15171a" /><rect x="424" y="792" width="1" height="1" fill="#7c8084" /><rect x="425" y="793" width="1" height="1" fill="#15171a" /><rect x="418" y="796" width="1" height="1" fill="#7c8084" /><rect x="419" y="797" width="1" height="1" fill="#15171a" /><rect x="421" y="796" width="1" height="1" fill="#7c8084" /><rect x="422" y="797" width="1" height="1" fill="#15171a" /><rect x="424" y="796" width="1" height="1" fill="#7c8084" /><rect x="425" y="797" width="1" height="1" fill="#15171a" /><rect x="1001" y="776" width="1" height="1" fill="#d0d0d0" /><rect x="1002" y="777" width="1" height="1" fill="#15171a" /><rect x="1004" y="776" width="1" height="1" fill="#d0d0d0" /><rect x="1005" y="777" width="1" height="1" fill="#15171a" /><rect x="1007" y="776" width="1" height="1" fill="#d0d0d0" /><rect x="1008" y="777" width="1" height="1" fill="#15171a" /><rect x="1001" y="780" width="1" height="1" fill="#d0d0d0" /><rect x="1002" y="781" width="1" height="1" fill="#15171a" /><rect x="1004" y="780" width="1" height="1" fill="#d0d0d0" /><rect x="1005" y="781" width="1" height="1" fill="#15171a" /><rect x="1007" y="780" width="1" height="1" fill="#d0d0d0" /><rect x="1008" y="781" width="1" height="1" fill="#15171a" /><rect x="1001" y="784" width="1" height="1" fill="#d0d0d0" /><rect x="1002" y="785" width="1" height="1" fill="#15171a" /><rect x="1004" y="784" width="1" height="1" fill="#d0d0d0" /><rect x="1005" y="785" width="1" height="1" fill="#15171a" /><rect x="1007" y="784" width="1" height="1" fill="#d0d0d0" /><rect x="1008" y="785" width="1" height="1" fill="#15171a" /><rect x="1001" y="788" width="1" height="1" fill="#7c8084" /><rect x="1002" y="789" width="1" height="1" fill="#15171a" /><rect x="1004" y="788" width="1" height="1" fill="#7c8084" /><rect x="1005" y="789" width="1" height="1" fill="#15171a" /><rect x="1007" y="788" width="1" height="1" fill="#7c8084" /><rect x="1008" y="789" width="1" height="1" fill="#15171a" /><rect x="1001" y="792" width="1" height="1" fill="#7c8084" /><rect x="1002" y="793" width="1" height="1" fill="#15171a" /><rect x="1004" y="792" width="1" height="1" fill="#7c8084" /><rect x="1005" y="793" width="1" height="1" fill="#15171a" /><rect x="1007" y="792" width="1" height="1" fill="#7c8084" /><rect x="1008" y="793" width="1" height="1" fill="#15171a" /><rect x="1001" y="796" width="1" height="1" fill="#7c8084" /><rect x="1002" y="797" width="1" height="1" fill="#15171a" /><rect x="1004" y="796" width="1" height="1" fill="#7c8084" /><rect x="1005" y="797" width="1" height="1" fill="#15171a" /><rect x="1007" y="796" width="1" height="1" fill="#7c8084" /><rect x="1008" y="797" width="1" height="1" fill="#15171a" /></g><rect x="80" y="777" width="16" height="15" fill="#c8d4e6" /><rect x="81" y="778" width="14" height="10" fill="#2b62c8" /><rect x="81" y="788" width="14" height="3" fill="#1c1c1c" /><rect x="82" y="786" width="3" height="3" fill="#f08030" /><rect x="104" y="777" width="16" height="15" fill="#c8d4e6" /><rect x="105" y="778" width="14" height="13" fill="#12308a" /><rect x="106" y="780" width="7" height="4" fill="#e8eef8" /><rect x="108" y="783" width="7" height="4" fill="#e8eef8" /><rect x="110" y="786" width="7" height="4" fill="#e8eef8" /><rect x="106" y="780" width="7" height="1" fill="#3a7" /><rect x="108" y="783" width="7" height="1" fill="#3a7" /><rect x="110" y="786" width="7" height="1" fill="#3a7" /><rect x="128" y="776" width="12" height="4" fill="#f5a623" /><rect x="127" y="780" width="15" height="9" fill="#e9eff7" /><rect x="129" y="782" width="11" height="1" fill="#c33" /><rect x="130" y="786" width="9" height="6" fill="#3aa0c8" /><rect x="132" y="789" width="5" height="3" fill="#e9eff7" /><rect x="138" y="779" width="3" height="3" fill="#f26522" /><path d="M153 777h11v15h-13z" fill="#9fd0e6" stroke="#d8e4ea" stroke-width="1"/><rect x="153" y="776" width="11" height="2" fill="#667" /><rect x="153" y="780" width="10" height="1" fill="#6fb0cc" /><rect x="153" y="782" width="10" height="1" fill="#6fb0cc" /><rect x="153" y="784" width="10" height="1" fill="#6fb0cc" /><rect x="153" y="786" width="10" height="1" fill="#6fb0cc" /><rect x="153" y="788" width="10" height="1" fill="#6fb0cc" /><rect x="153" y="790" width="10" height="1" fill="#6fb0cc" /><path d="M172 785l5-1 1-5 2 0 0 5 7-3 -5 5 -3 1 -3 7 -1-6 -3-1z" fill="#1010ff"/><rect x="199.5" y="776.500" width="9" height="11" rx="2.500" fill="#f8f8f4"/><rect x="201.5" y="778.5" width="5" height="6" fill="#e8e040" /><rect x="203" y="779" width="2" height="2" fill="#222" /><rect x="202" y="782" width="4" height="1" fill="#222" /><rect x="202" y="784" width="1" height="2" fill="#222" /><rect x="205" y="784" width="1" height="2" fill="#222" /><rect x="203" y="787" width="2" height="3" fill="#1a1a7a" /><rect x="199" y="790" width="9" height="1.5" fill="#9aa0e8" /><ellipse cx="209" cy="789" rx="2.500" ry="2" fill="#999"/><rect x="220" y="783" width="14" height="7" fill="#15171a" /><rect x="221" y="785" width="1" height="1" fill="#8cc" /><rect x="224" y="787" width="1" height="1" fill="#8cc" /><rect x="227" y="785" width="1" height="1" fill="#8cc" /><rect x="230" y="787" width="1" height="1" fill="#8cc" /><rect x="233" y="785" width="1" height="1" fill="#8cc" /><path d="M243.5 777h13l-2 15h-9z" fill="#a9c4dc" stroke="#dfe8f0" stroke-width="1"/><circle cx="250" cy="785" r="3.200" fill="#3d7fd0"/><path d="M266 778l9-3 5 11-9 5z" fill="#222"/><circle cx="270" cy="783" r="2.500" fill="#e33"/><circle cx="275" cy="783" r="2.500" fill="#3c3"/><circle cx="271" cy="787" r="2.500" fill="#e3e"/><circle cx="276" cy="787" r="2.500" fill="#fc0"/><circle cx="273" cy="780" r="2" fill="#3cf"/><rect x="288" y="777" width="16" height="16" fill="#2d8ce8" /><rect x="289.5" y="778.5" width="13" height="13" fill="#6cc8a4" /><circle cx="296" cy="785" r="5.800" fill="#f28a1e"/><path d="M294 781.500l5.500 3.500-5.500 3.500z" fill="#fff"/><circle cx="319" cy="785" r="6" fill="none" stroke="#2a7fe0" stroke-width="3.200"/><rect x="314" y="784" width="11" height="2.5" fill="#2a7fe0" /><path d="M311 790q8-13 15-12" fill="none" stroke="#f0b020" stroke-width="1.600"/><path d="M336 777h7l2 1h3v14h-12z" fill="#edd682"/><rect x="342" y="778" width="3" height="14" fill="#d9bd55" /><rect x="346" y="786" width="1.5" height="3" fill="#6af" /><circle cx="365" cy="785" r="7.500" fill="#e8e8e8"/><path d="M365 785L361 778.500A7.500 7.500 0 0 1 372 781z" fill="#dd3b2a"/><path d="M359.5 778.500A7.500 7.500 0 0 1 372 781.500L365 785z" fill="#dd3b2a"/><path d="M372 781.500A7.500 7.500 0 0 1 364 792.400L365 785z" fill="#f2c118"/><path d="M364 792.400A7.500 7.500 0 0 1 359 780L365 785z" fill="#3fa03b"/><circle cx="365" cy="785" r="3.300" fill="#fff"/><circle cx="365" cy="785" r="2.500" fill="#3b7fe0"/><circle cx="388" cy="785.300" r="7.700" fill="#e6711b"/><circle cx="389.8" cy="782.600" r="4.700" fill="#3273d6"/><circle cx="390.5" cy="781.500" r="2" fill="#59b0ee"/><path d="M381.3 777.500l2.200 2 1.800-2.300 1.300 2.800q2.800.2 3.200 2.600-2.400-.3-2.800 1.600 1.600 1.500 3.600.5-.8 3.200-4.600 2.800-3.600-.3-4.900-3.600-.8-3 .2-6.400z" fill="#f7a02c"/><path d="M381.5 787q3 5 8 3.500 3.500-1.300 4.500-5 1.500 4-2 7-4.500 2.500-8.500-.5-2.200-2.300-2-5z" fill="#f08c1e"/><rect x="433.5" y="771.500" width="136" height="27" rx="3.500" fill="none" stroke="#8a8e92" stroke-opacity=".75" stroke-width="1"/><rect x="434.5" y="772.500" width="134" height="25" rx="2.500" fill="url(#tb)" stroke="#15181c" stroke-width="1"/><rect x="573.5" y="771.500" width="136" height="27" rx="3.500" fill="none" stroke="#8a8e92" stroke-opacity=".75" stroke-width="1"/><rect x="574.5" y="772.500" width="134" height="25" rx="2.500" fill="url(#tb)" stroke="#15181c" stroke-width="1"/><rect x="713.5" y="771.500" width="136" height="27" rx="3.500" fill="none" stroke="#8a8e92" stroke-opacity=".75" stroke-width="1"/><rect x="714.5" y="772.500" width="134" height="25" rx="2.500" fill="url(#tba)" stroke="#15181c" stroke-width="1"/><rect x="853.5" y="771.500" width="136" height="27" rx="3.500" fill="none" stroke="#8a8e92" stroke-opacity=".75" stroke-width="1"/><rect x="854.5" y="772.500" width="134" height="25" rx="2.500" fill="url(#tb)" stroke="#15181c" stroke-width="1"/><g font-family='"Liberation Sans",Arial,sans-serif' font-size="12.500px" fill="#fff"><text x="462" y="789" textLength="96" lengthAdjust="spacingAndGlyphs">MetaStock Profe...</text><text x="602" y="789" textLength="89" lengthAdjust="spacingAndGlyphs">Sesja dzisiejsza ...</text><text x="743" y="789" textLength="94" lengthAdjust="spacingAndGlyphs">Fibonacci/Galac...</text><text x="883" y="789" textLength="94" lengthAdjust="spacingAndGlyphs">Microsoft Photo...</text><text x="1020" y="787.500" textLength="12.5" lengthAdjust="spacingAndGlyphs">PL</text><text x="1239.500" y="789" textLength="27" lengthAdjust="spacingAndGlyphs">01:00</text></g><g font-family='"Liberation Serif",serif' font-weight="bold" font-size="11px" fill="#e00000"><text x="220" y="784" textLength="14" lengthAdjust="spacingAndGlyphs">MS</text><text x="442.500" y="784" textLength="14" lengthAdjust="spacingAndGlyphs">MS</text></g><rect x="443" y="783" width="14" height="7" fill="#15171a" /><rect x="444" y="785" width="1" height="1" fill="#8cc" /><rect x="447" y="787" width="1" height="1" fill="#8cc" /><rect x="450" y="785" width="1" height="1" fill="#8cc" /><rect x="453" y="787" width="1" height="1" fill="#8cc" /><rect x="456" y="785" width="1" height="1" fill="#8cc" /><circle cx="590" cy="785.300" r="7.700" fill="#e6711b"/><circle cx="591.8" cy="782.600" r="4.700" fill="#3273d6"/><circle cx="592.5" cy="781.500" r="2" fill="#59b0ee"/><path d="M583.3 777.500l2.200 2 1.800-2.300 1.300 2.800q2.800.2 3.200 2.600-2.400-.3-2.800 1.600 1.600 1.500 3.600.5-.8 3.200-4.600 2.800-3.600-.3-4.900-3.600-.8-3 .2-6.400z" fill="#f7a02c"/><path d="M583.5 787q3 5 8 3.500 3.500-1.300 4.500-5 1.500 4-2 7-4.500 2.500-8.500-.5-2.200-2.300-2-5z" fill="#f08c1e"/><rect x="722" y="777" width="8" height="8" fill="#1010e0" /><rect x="723" y="779" width="5" height="1" fill="#fff" /><rect x="724" y="781" width="4" height="1" fill="#fff" /><rect x="726" y="778" width="1" height="5" fill="#fff" /><rect x="734" y="779" width="2" height="3" fill="#00c8d0" /><rect x="724" y="790" width="2" height="2" fill="#f0f" /><rect x="729" y="791" width="1" height="2" fill="#0c0" /><rect x="734" y="788" width="1" height="1" fill="#ccc" /><path d="M864 778l9-3 5 11-9 5z" fill="#222"/><circle cx="868" cy="783" r="2.500" fill="#e33"/><circle cx="873" cy="783" r="2.500" fill="#3c3"/><circle cx="869" cy="787" r="2.500" fill="#e3e"/><circle cx="874" cy="787" r="2.500" fill="#fc0"/><circle cx="871" cy="780" r="2" fill="#3cf"/><path d="M1042 781.500h13l1 8h-15z" fill="#d8d8d8" stroke="#f4f4f4" stroke-width=".800"/><path d="M1043.500 784h10M1043 786h11M1044 788h9" stroke="#555" stroke-width=".800" stroke-dasharray="1.500 1"/><path d="M1047 781q1-3 6-3.500" fill="none" stroke="#ccc" stroke-width="1"/><path d="M1127.500 779.500l-5 4.500 5 4.500" fill="none" stroke="#fff" stroke-width="2"/><circle cx="1142" cy="783" r="7" fill="#8cc63f"/><circle cx="1146" cy="787" r="4.500" fill="#f2f2f2" stroke="#555" stroke-width="1"/><path d="M1146 784.500v2.500h2" fill="none" stroke="#333" stroke-width="1"/><rect x="1153" y="776" width="16" height="15" fill="#f4f4f4" /><rect x="1154.5" y="777" width="13" height="1" fill="#1a1a90" /><rect x="1154.5" y="778" width="13" height="8" fill="#b4b4b4" /><rect x="1154" y="787.5" width="6.5" height="3" fill="#1a1a90" /><rect x="1161.5" y="787.5" width="6.5" height="3" fill="#1a1a90" /><rect x="1155" y="788.5" width="4.5" height="1" fill="#b4b4b4" /><rect x="1162.5" y="788.5" width="4.5" height="1" fill="#b4b4b4" /><rect x="1187" y="778" width="9" height="13" fill="#e8f0e0" stroke="#fff" stroke-width="1"/><rect x="1188.5" y="781" width="6" height="9" fill="#9ad08a" /><rect x="1189" y="776" width="5" height="2" fill="#ddd" /><path d="M1182 776v4M1185 776v4M1181 780h5v3h-1.500v6h-2v-6h-1.500z" stroke="#f0e8d0" stroke-width="1" fill="#f0e8d0"/><rect x="1203" y="776" width="11" height="8" fill="#e8eef8" /><rect x="1204.5" y="777.5" width="8" height="5" fill="#2a62c8" /><rect x="1199" y="781" width="10" height="8" fill="#e8eef8" /><rect x="1200.5" y="782.5" width="7" height="5" fill="#2a62c8" /><circle cx="1210" cy="788" r="4" fill="#3a9ad8"/><path d="M1208 786q2 1 2 4M1211 785q1 2 0 5" stroke="#6c3" stroke-width="1.500" fill="none"/><path d="M1217.500 781.500h3l4.500-4.500v15l-4.500-4.500h-3z" fill="#f0f0f0"/><path d="M1227 781q2 3.500 0 7M1229.500 779q3 5.500 0 11" fill="none" stroke="#8cd08c" stroke-width="1.200"/></svg>
</body></html>
